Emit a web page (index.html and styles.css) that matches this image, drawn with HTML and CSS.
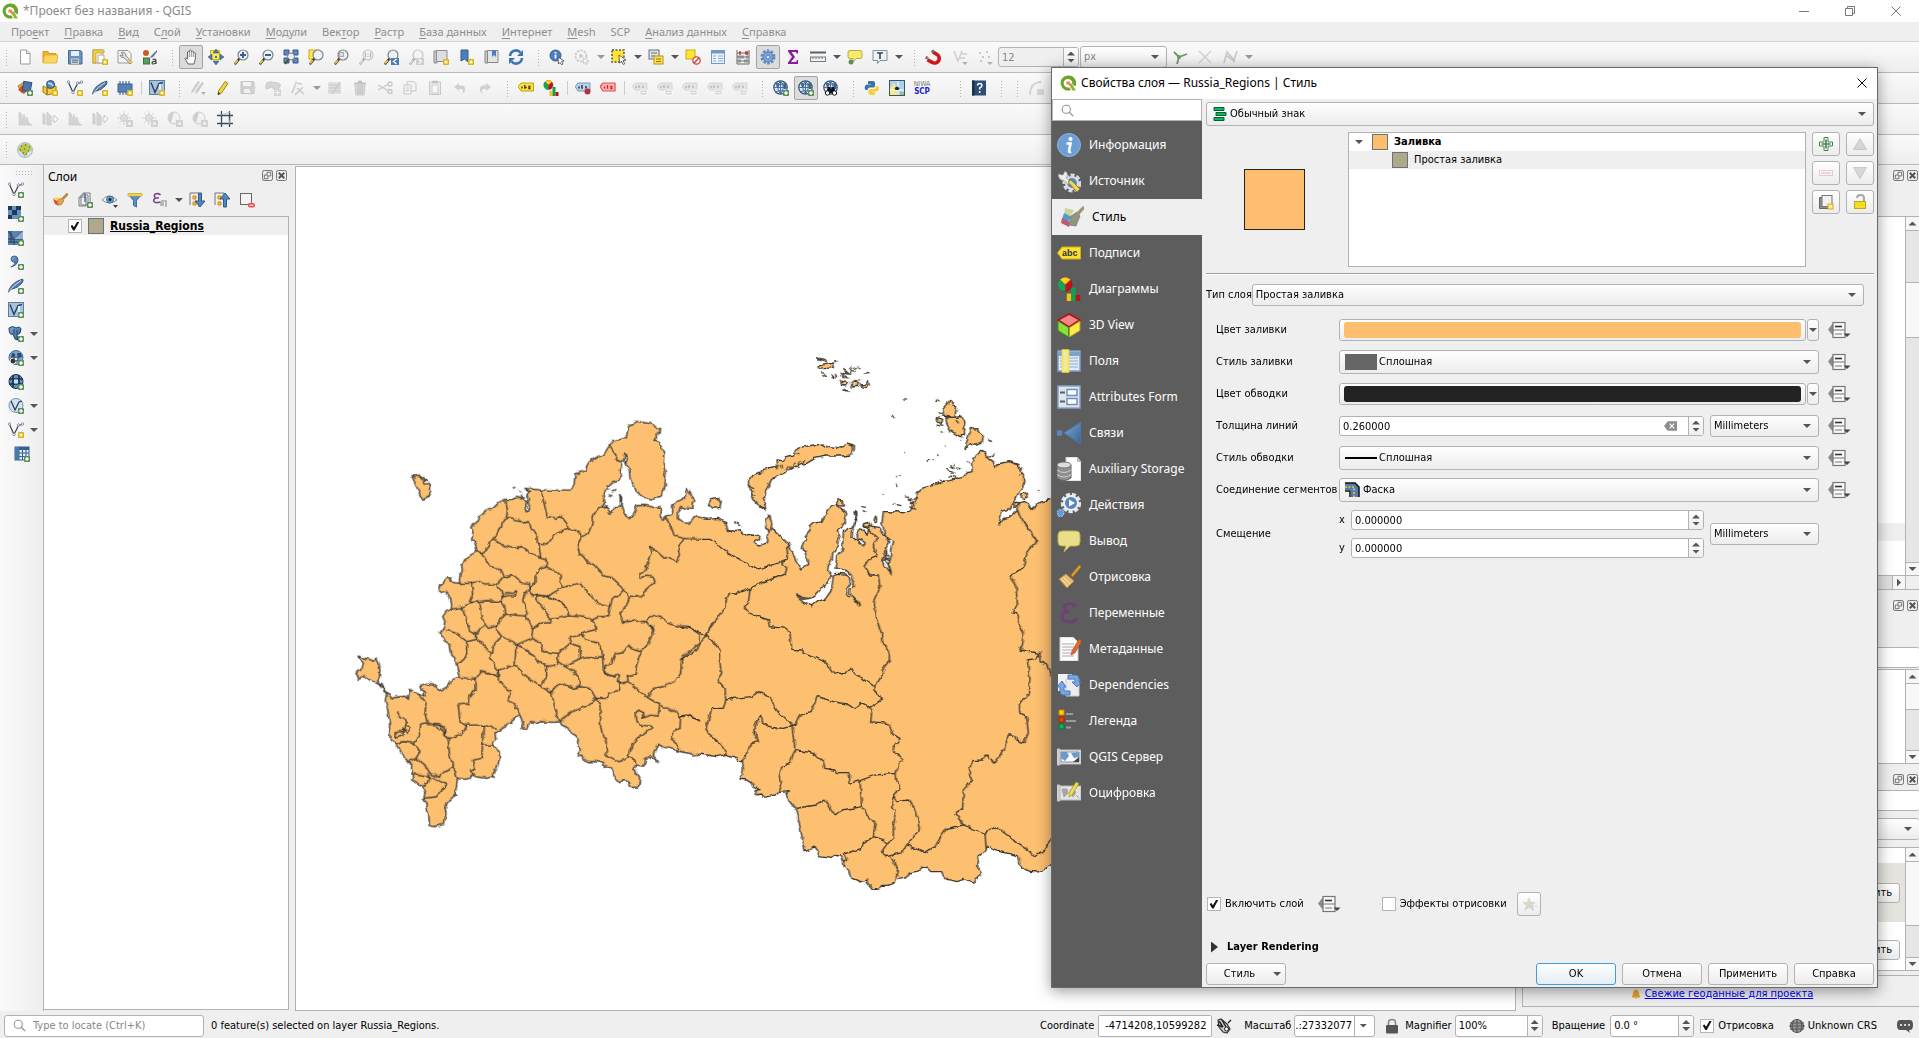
FILE: index.html
```html
<!DOCTYPE html>
<html lang="ru">
<head>
<meta charset="utf-8">
<title>*Проект без названия - QGIS</title>
<link rel="stylesheet" href="styles.css">
</head>
<body>
<svg class="sprite" aria-hidden="true">
<defs>
<filter id="coast" x="0" y="0" width="1" height="1"><feTurbulence type="fractalNoise" baseFrequency=".05" numOctaves="2" seed="4"/><feDisplacementMap in="SourceGraphic" scale="14" xChannelSelector="R" yChannelSelector="G"/></filter>
<linearGradient id="steel" x1="0" y1="0" x2="1" y2="1"><stop offset="0" stop-color="#7fa8d4"/><stop offset="1" stop-color="#39618f"/></linearGradient>
<g id="plusG"><rect x="10" y="10" width="6" height="6" rx="1" fill="#5b8f5a"/><path d="M13 11.200v3.600M11.200 13h3.600" stroke="#fff" stroke-width="1.600"/></g>
<g id="plusY"><rect x="10" y="10" width="6" height="6" rx="1" fill="#d8b41c"/><rect x="11.500" y="11.500" width="3" height="3" fill="#fff6b8"/></g>
<g id="lens"><path d="M2.500 14.500l4-5" stroke="#3b3a2c" stroke-width="2.400" stroke-linecap="round"/><path d="M2.200 14.500l2.600-3.200" stroke="#f2c53d" stroke-width="1.600"/><circle cx="10" cy="6" r="5" fill="#eef1f3" stroke="#7d8488" stroke-width="1.200"/></g>
</defs>
<symbol id="qlogo" viewBox="0 0 16 16"><path d="M8 .500a7.500 7.500 0 1 0 3 14.400L9.200 12.300A4.300 4.300 0 1 1 12.200 9l3 2.600A7.500 7.500 0 0 0 8 .500z" fill="#6aa52c"/><path d="M8 8l4 1 4 6.500h-3.500z" fill="#8cb82e"/><path d="M6.500 6.500h4l-1 1 2 2-1.500 1.500-2-2-1.500 1z" fill="#f0803c"/></symbol>
<symbol id="new" viewBox="0 0 16 16"><path d="M3.500 1h6l3.500 3.500V15h-9.500z" fill="#fff" stroke="#9a9a9a"/><path d="M9.500 1v3.500H13" fill="#e8e8e8" stroke="#9a9a9a"/></symbol>
<symbol id="open" viewBox="0 0 16 16"><path d="M1 2.500h5l1 2h7v9H1z" fill="#eeb42a" stroke="#d59c20"/><path d="M2.500 6H16l-1.500 8H1z" fill="#fbd75c" stroke="#dca72d" stroke-width=".8"/></symbol>
<symbol id="save" viewBox="0 0 16 16"><path d="M1.500 1.500h12l1.500 1.500v12H1.500z" fill="#6a93bf" stroke="#49698c"/><rect x="4" y="2" width="8" height="5" fill="#e6edf5"/><rect x="4" y="9.500" width="8" height="5.500" fill="#c9d3dd"/><path d="M5 11.200h6M5 13.200h6" stroke="#5c6975"/></symbol>
<symbol id="layout" viewBox="0 0 16 16"><rect x="1" y="1" width="9" height="13" fill="#fff" stroke="#9a9a9a"/><path d="M1 14V1h11v3H4v10z" fill="#f5ce4a" stroke="#c99c1c" stroke-width=".8"/><path d="M6 6h6v8H6z" fill="#fff" stroke="#aaa"/><use href="#plusY"/></symbol>
<symbol id="settings" viewBox="0 0 16 16"><path d="M1 1.500h10l3 3V14H1z" fill="#f4f4f4" stroke="#999"/><path d="M4 4a3 3 0 0 1 5 2.500l6 7-2 1.500-6-6.500A3 3 0 0 1 3 6l2.500 1L6 5z" fill="#d7dde3" stroke="#6f767c" stroke-width=".8"/><path d="M11 10l4 4" stroke="#e9bf3c" stroke-width="2"/></symbol>
<symbol id="stylemgr" viewBox="0 0 16 16"><circle cx="4" cy="4" r="3" fill="#cf5a28"/><path d="M15 1L9 7l-1 2 3-1 4-5z" fill="#55789c"/><rect x="1.500" y="9" width="6" height="6" fill="#59a05c" stroke="#39753c"/><path d="M10.500 10.500q3.500-1 3.500 1.500v3M14 12.500q-4-.5-4 1.500t4 0" fill="none" stroke="#444" stroke-width="1.200"/></symbol>
<symbol id="hand" viewBox="0 0 16 16"><path d="M5 15L2 9.500q0-1.500 2.500.5V3q1-1.300 1.800 0V1.700q1.200-1.200 2 0v1q1.200-1.200 2 0v1q1.200-1 2 .3V10l-1.300 5z" fill="#fff" stroke="#555" stroke-width=".9"/><path d="M6.300 3v5M8.300 3v5M10.300 3.500V8" stroke="#777" stroke-width=".8"/></symbol>
<symbol id="pan" viewBox="0 0 16 16"><rect x="2.500" y="1.500" width="9" height="9" fill="#ffe949" stroke="#c0a71a" stroke-width=".8"/><path d="M8 0l3 4H5zM8 16l3-4H5zM0 8l4-3v6zM16 8l-4-3v6z" fill="#4a76a8" stroke="#2e5078" stroke-width=".5"/><path d="M7 7h2v2H7z" fill="#4a76a8"/></symbol>
<symbol id="zin" viewBox="0 0 16 16"><use href="#lens"/><path d="M10 3v6M7 6h6" stroke="#355f97" stroke-width="2"/></symbol>
<symbol id="zout" viewBox="0 0 16 16"><use href="#lens"/><path d="M7 6h6" stroke="#355f97" stroke-width="2"/></symbol>
<symbol id="zfull" viewBox="0 0 16 16"><path d="M1 1h5v5H1zM10 1h5v5h-5zM10 9h5v5h-5zM1 9h5v5H1z" fill="#5b8ac0" stroke="#31588a"/><circle cx="8" cy="7.500" r="3.500" fill="#e8edf2" stroke="#777"/><path d="M2 15l4-5" stroke="#54512e" stroke-width="2"/></symbol>
<symbol id="zsel" viewBox="0 0 16 16"><rect x="1" y="1" width="10" height="9" fill="#ffe949" stroke="#c5aa1c"/><use href="#lens"/></symbol>
<symbol id="zlay" viewBox="0 0 16 16"><use href="#lens"/><rect x="6.500" y="3.500" width="4" height="4" fill="#ddd" stroke="#aaa"/></symbol>
<symbol id="znat" viewBox="0 0 16 16"><use href="#lens"/><path d="M7.500 3.500v5M12.500 3.500v5M10 4.500v1M10 7v1" stroke="#555" stroke-width="1.200"/></symbol>
<symbol id="zlast" viewBox="0 0 16 16"><use href="#lens"/><rect x="8" y="9" width="8" height="7" fill="#4d7db5"/><path d="M13.500 10l-3 2.500 3 2.500" fill="none" stroke="#fff" stroke-width="1.300"/></symbol>
<symbol id="znext" viewBox="0 0 16 16"><use href="#lens"/><rect x="8" y="9" width="8" height="7" fill="#8a9bb0"/><path d="M10.500 10l3 2.500-3 2.500" fill="none" stroke="#fff" stroke-width="1.300"/></symbol>
<symbol id="bmmap" viewBox="0 0 16 16"><path d="M1 2h3v12H1z" fill="#c9c9c9" stroke="#8d8d8d"/><path d="M3.500 1.500H14v11H3.500z" fill="#dedede" stroke="#8d8d8d"/><use href="#plusY"/></symbol>
<symbol id="bmnew" viewBox="0 0 16 16"><path d="M3 1h7v12l-3.500-3L3 12z" fill="#4f7fb8" stroke="#365d8c"/><use href="#plusY"/></symbol>
<symbol id="bm" viewBox="0 0 16 16"><path d="M2 2h3v12H2z" fill="#ccc" stroke="#888"/><path d="M4.500 1.500H15v12H4.500z" fill="#e4e4e4" stroke="#888"/><path d="M9 1h4v7l-2-2-2 2z" fill="#4f7fb8"/></symbol>
<symbol id="refresh" viewBox="0 0 16 16"><path d="M2 7a6 6 0 0 1 10.500-3.500M14 9a6 6 0 0 1-10.500 3.500" fill="none" stroke="#3d74b5" stroke-width="2.600"/><path d="M15 1v6H9zM1 15V9h6z" fill="#3d74b5"/></symbol>
<symbol id="ident" viewBox="0 0 16 16"><circle cx="6.500" cy="6.500" r="5.500" fill="#4b7fbc" stroke="#345f91"/><path d="M6.500 5.500v4M6.500 3v1.500" stroke="#fff" stroke-width="1.800"/><path d="M9 8l6 4-2.500.5L14 15l-1.500.8L11 13.500 9.500 15z" fill="#fff" stroke="#444" stroke-width=".8"/></symbol>
<symbol id="action" viewBox="0 0 16 16"><circle cx="7" cy="7" r="5.500" fill="none" stroke="#999" stroke-width="2" stroke-dasharray="2.500 1"/><path d="M5.500 4.500L10 7l-4.500 2.500z" fill="#888"/><path d="M9 9l6 3-2.500.5 1 2.500-1.500.5-1-2-1.500 1z" fill="#fff" stroke="#777" stroke-width=".8"/></symbol>
<symbol id="select" viewBox="0 0 16 16"><rect x="1" y="1" width="12" height="12" fill="#ffe531" stroke="#555" stroke-width="1.500" stroke-dasharray="2 1.500"/><path d="M8 6l7 5-3 .5 1.800 3.200-1.500.8-1.800-3L8.500 14z" fill="#fff" stroke="#444" stroke-width=".8"/></symbol>
<symbol id="selform" viewBox="0 0 16 16"><rect x="1" y="1" width="10" height="9" fill="#dce2e8" stroke="#67727d"/><path d="M3 4h6M3 7h4" stroke="#67727d"/><rect x="6" y="7" width="9" height="8" fill="#ffe14a" stroke="#b3941e"/><path d="M8 10h5M8 12.500h5" stroke="#8b7316"/></symbol>
<symbol id="desel" viewBox="0 0 16 16"><rect x="1" y="1" width="9" height="9" fill="#ffe531" stroke="#c7ab1e"/><circle cx="11.500" cy="11.500" r="3.700" fill="#fff" stroke="#cf3f3f" stroke-width="1.300"/><path d="M9 14l5-5" stroke="#cf3f3f" stroke-width="1.400"/></symbol>
<symbol id="table" viewBox="0 0 16 16"><rect x="1.500" y="1.500" width="13" height="13" fill="#eef4fa" stroke="#6e9ac6"/><path d="M1.500 3h13" stroke="#6e9ac6" stroke-width="3"/><path d="M3 7h3M8 7h5M3 9.500h3M8 9.500h5M3 12h3M8 12h5" stroke="#86add3"/></symbol>
<symbol id="abacus" viewBox="0 0 16 16"><path d="M2 1v14h12V1M2 4h12M2 8h12M2 12h12" fill="none" stroke="#666"/><path d="M4 4h2M10 4h3" stroke="#cf3b3b" stroke-width="3.500"/><path d="M3 8h6M11 8h2M3 12h3M9 12h4" stroke="#8c9095" stroke-width="3"/></symbol>
<symbol id="gear" viewBox="0 0 16 16"><circle cx="8" cy="8" r="6.200" fill="none" stroke="#5b8ac4" stroke-width="2.600" stroke-dasharray="2.500 1.400"/><circle cx="8" cy="8" r="5" fill="#7ca5d8" stroke="#4f7cb1"/><circle cx="8" cy="8" r="2" fill="#dde8f5" stroke="#4f7cb1"/></symbol>
<symbol id="sigma" viewBox="0 0 16 16"><path d="M3 1h10v3.500h-1.500L11 3H6.500l3.500 5-4 5h5.200l.8-2H13v4H3v-1.500L7 8 3 2.500z" fill="#8b1a9c"/></symbol>
<symbol id="ruler" viewBox="0 0 16 16"><path d="M0 3.500h16" stroke="#59626b" stroke-width="2"/><rect x=".5" y="8" width="15" height="4.500" fill="#eef0f1" stroke="#777e85"/><path d="M3 8v2M6 8v2M9 8v2M12 8v2" stroke="#777"/></symbol>
<symbol id="tip" viewBox="0 0 16 16"><path d="M3 1.500h10q2 0 2 2v4q0 2-2 2H9L6 13V9.500H3q-2 0-2-2v-4q0-2 2-2z" fill="#f7ea6e" stroke="#bda83a"/><circle cx="4" cy="13" r="2.500" fill="#5b8f5a"/></symbol>
<symbol id="text" viewBox="0 0 16 16"><path d="M1 1.500h14v10H8l-2.500 3v-3H1z" fill="#f0f3f5" stroke="#81909c"/><path d="M5 4h6M8 4v6" stroke="#445" stroke-width="1.600"/></symbol>
<symbol id="magnet" viewBox="0 0 16 16"><path d="M9 3l3.500 3.500a4.500 4.500 0 0 1-6.500 6.500L2 9.500" fill="none" stroke="#cf1515" stroke-width="3.600" transform="rotate(-12 8 8)"/><path d="M6.500 3.500L9 1.200M1 10l1.500-2.500" stroke="#777" stroke-width="2.600"/></symbol>
<symbol id="vtrace" viewBox="0 0 16 16"><path d="M2 2l4 10 4-10M10 5h5M8 9h5" fill="none" stroke="#999" stroke-width="1.500"/><path d="M10 13h6l-3 3z" fill="#555"/></symbol>
<symbol id="dots" viewBox="0 0 16 16"><path d="M2 4h2M9 3h2M5 8h2M3 12h2M11 8h2" stroke="#888" stroke-width="2"/><path d="M10 13h6l-3 3z" fill="#555"/></symbol>
<symbol id="topo" viewBox="0 0 16 16"><path d="M2 3l5 5 8-3M7 8l-2 7" fill="none" stroke="#679a6b" stroke-width="1.800"/><circle cx="7" cy="8" r="2" fill="#679a6b"/></symbol>
<symbol id="cross" viewBox="0 0 16 16"><path d="M2 2l12 12M14 2L2 14" stroke="#999" stroke-width="1.400"/></symbol>
<symbol id="self" viewBox="0 0 16 16"><path d="M2 14L5 3l7 8 3-9M4 6l9 7" fill="none" stroke="#998f76" stroke-width="1.800"/></symbol>
<symbol id="dsman" viewBox="0 0 16 16"><path d="M1 6l6-4 4 7-6 4z" fill="#f2bf38" stroke="#a97e13"/><path d="M1 10l4-5 6 5-4 4z" fill="#cf5030"/><path d="M6 2h8v9H6z" fill="#4b76ab" stroke="#2f5580" transform="rotate(10 10 7)"/><use href="#plusG"/></symbol>
<symbol id="newgpkg" viewBox="0 0 16 16"><path d="M1 6l4 2v7l-4-3zM5 8l9-2v7l-9 2z" fill="#f4cc37" stroke="#9b7b16"/><circle cx="8.500" cy="4.500" r="4" fill="#5a87bd" stroke="#2b4b73"/><path d="M6 3l3 1 2 2" stroke="#cddff1" stroke-width="1.500"/><use href="#plusY"/></symbol>
<symbol id="vee" viewBox="0 0 16 16"><path d="M1.500 2.500L6 12.500l4.500-9 4-1" fill="none" stroke="#33475c" stroke-width="1.200"/><g fill="#fff" stroke="#7b8894" stroke-width=".9"><circle cx="1.500" cy="2" r="1.200"/><circle cx="10.500" cy="3" r="1.200"/><circle cx="14.500" cy="2" r="1.200"/><circle cx="6" cy="12.500" r="1.200"/></g></symbol>
<symbol id="newshp" viewBox="0 0 16 16"><use href="#vee"/><use href="#plusY"/></symbol>
<symbol id="addvec" viewBox="0 0 16 16"><use href="#vee"/><use href="#plusG"/></symbol>
<symbol id="feather" viewBox="0 0 16 16"><path d="M0 15Q2 5 14.500 1q1.500 1-.5 4Q10 10 3 11.500z" fill="url(#steel)" stroke="#23405f" stroke-width=".8"/><path d="M0 15Q5 7 13 2.500" fill="none" stroke="#dbe7f3" stroke-width=".8"/></symbol>
<symbol id="newspl" viewBox="0 0 16 16"><use href="#feather"/><use href="#plusY"/></symbol>
<symbol id="addspl" viewBox="0 0 16 16"><use href="#feather"/><use href="#plusG"/></symbol>
<symbol id="mem" viewBox="0 0 16 16"><path d="M3 1v14M6 1v14M9 1v14M12 1v14" stroke="#5d7fa6" stroke-width="1.400"/><rect x="1" y="4" width="14" height="8" fill="#5682b5" stroke="#39618f"/><use href="#plusY"/></symbol>
<symbol id="veebox" viewBox="0 0 16 16"><rect x=".5" y=".5" width="15" height="14" fill="#a9c3dd" stroke="#5a7ea4"/><path d="M2 2.500L6 12.500l4-9 4-1" fill="none" stroke="#24415f" stroke-width="1.400"/><path d="M11 4v8" stroke="#e3edf6" stroke-width="2"/></symbol>
<symbol id="newvirt" viewBox="0 0 16 16"><use href="#veebox"/><use href="#plusY"/></symbol>
<symbol id="addvirt" viewBox="0 0 16 16"><use href="#veebox"/><use href="#plusG"/></symbol>
<symbol id="pencils" viewBox="0 0 16 16"><path d="M1 14l1-4 6-9 2 1-6 9zM5 14l1-4 6-8 2 1-6 9z" fill="#8f8f8f"/><path d="M11 12h5l-2.500 3z" fill="#555"/></symbol>
<symbol id="pencil" viewBox="0 0 16 16"><path d="M3 15l.5-4L10 1.500l3 1.800L6.500 13z" fill="#f2d93a" stroke="#8f7a1b" stroke-width=".9"/><path d="M3 15l.4-3 2 1.200z" fill="#333"/></symbol>
<symbol id="savelay" viewBox="0 0 16 16"><path d="M1 1.500h13v12H1z" fill="#999" stroke="#777"/><path d="M3 2h8v4H3zM4 9h6v4H4z" fill="#eee"/><path d="M9 14l5-8 2 1-5 8z" fill="#aaa"/></symbol>
<symbol id="addpoly" viewBox="0 0 16 16"><path d="M1 5q0-3 4-3t8 1 1 5-5 1-5-1-3 0z" fill="#aaa" stroke="#888"/><rect x="9" y="9" width="7" height="7" fill="#aaa"/><path d="M12.500 10v5M10 12.500h5" stroke="#fff"/></symbol>
<symbol id="vertex" viewBox="0 0 16 16"><path d="M2 13L6 3l6 1M7 8l7 6M13 7l-8 8" fill="none" stroke="#888" stroke-width="1.500"/><circle cx="6" cy="3" r="1.700" fill="#bbb"/></symbol>
<symbol id="multi" viewBox="0 0 16 16"><path d="M1 2h13v12H1z" fill="#c7c3ad"/><path d="M2 5h11M2 8h11M2 11h11" stroke="#888"/><path d="M4 14L12 2l2 1-8 11z" fill="#999"/></symbol>
<symbol id="trash" viewBox="0 0 16 16"><path d="M2 3.500h12M6 1.500h4" stroke="#777" stroke-width="1.800"/><path d="M3 5h10l-1 10H4z" fill="#b9adad" stroke="#888"/><path d="M6 6v8M8 6v8M10 6v8" stroke="#777"/></symbol>
<symbol id="cut" viewBox="0 0 16 16"><path d="M1 5l11 6M1 10l11-6" stroke="#888" stroke-width="1.400"/><circle cx="13" cy="11.500" r="2" fill="none" stroke="#888" stroke-width="1.400"/><circle cx="13" cy="4" r="2" fill="none" stroke="#888" stroke-width="1.400"/></symbol>
<symbol id="copy" viewBox="0 0 16 16"><path d="M5 1.500h7l2 2V11H5z" fill="#eee" stroke="#888"/><path d="M2 5h7v9H2z" fill="#eee" stroke="#888"/><path d="M4 8h3M4 10.500h3" stroke="#888"/></symbol>
<symbol id="paste" viewBox="0 0 16 16"><rect x="2.500" y="2" width="11" height="12.500" fill="#ddd" stroke="#888"/><rect x="5" y="5" width="6" height="8" fill="#fff" stroke="#999"/><path d="M5 2h6" stroke="#777" stroke-width="2.500"/></symbol>
<symbol id="undo" viewBox="0 0 16 16"><path d="M2 7l5-4v2.500h3q4 .5 3 5.500l-2.500 3q1.500-4.500-1-5H7V11z" fill="#9d9d9d"/></symbol>
<symbol id="redo" viewBox="0 0 16 16"><path d="M14 7L9 3v2.500H6Q2 6 3 11l2.500 3Q4 9.500 6.500 9H9v2z" fill="#9d9d9d"/></symbol>
<symbol id="label" viewBox="0 0 16 16"><path d="M0 6.500L3 3h12.500v8H3z" fill="#fbe136" stroke="#bfa31b"/><path d="M4 6.500v2M6.800 5v3.700M7.500 7.500h1.200M12.500 6.500h-1.500v2h1.500" stroke="#333" stroke-width="1.300" fill="none"/></symbol>
<symbol id="diag" viewBox="0 0 16 16"><circle cx="5.500" cy="5" r="4.500" fill="#c8101c" stroke="#7c1010" stroke-width=".4"/><path d="M5.500 5L2 1.800a4.500 4.500 0 0 1 7 0z" fill="#ffd21a"/><path d="M5.500 5v4.500A4.500 4.500 0 0 1 2 1.800z" fill="#12a655"/><path d="M6.500 11h3v5h-3z" fill="#f4c21a"/><path d="M9.500 7h3v9h-3z" fill="#12a04e"/><path d="M12.500 12h3v4h-3z" fill="#b3151c"/></symbol>
<symbol id="lblpin" viewBox="0 0 16 16"><path d="M0 6.500L3 3h12v8H3z" fill="#b9d2ee" stroke="#7397bf"/><path d="M4 6.500v2M7 5v3.700M11 6v2.500" stroke="#333" stroke-width="1.500"/><circle cx="12.500" cy="11.500" r="3" fill="#b5303c"/></symbol>
<symbol id="lblred" viewBox="0 0 16 16"><path d="M0 6.500L3 3h12v8H3z" fill="#ffb4b4" stroke="#ec4b4b" stroke-width="1.200"/><path d="M4.500 6.500v2M7.500 5v3.700M12.500 6.500h-1.500v2h1.500" stroke="#c22" stroke-width="1.300" fill="none"/></symbol>
<symbol id="lblgrey" viewBox="0 0 16 16"><path d="M0 6.500L3 3h12v7H3z" fill="#cfcdbf" stroke="#aaa793"/><path d="M4 6v2M7 5v3M11 5.500V8" stroke="#666" stroke-width="1.500"/><path d="M8 10h7v5H8z" fill="#aaa" stroke="#fff"/><path d="M9.500 12.500h4" stroke="#fff"/></symbol>
<symbol id="globe" viewBox="0 0 16 16"><circle cx="7.500" cy="7.500" r="6.700" fill="#dbe8f5" stroke="#335379" stroke-width="1.200"/><path d="M7.500 1v13M1 7.500h13M3 3.500q4.500 2 9 0M3 11.500q4.500-2 9 0M7.500 1Q2 7 7.500 14M7.500 1q5.500 6 0 13" fill="none" stroke="#496f9d"/><path d="M3 4q2-2 3 0t-2 4zM10 4h3v5h-2z" fill="#42648b"/></symbol>
<symbol id="globeadd" viewBox="0 0 16 16"><use href="#globe"/><use href="#plusG"/></symbol>
<symbol id="binoc" viewBox="0 0 16 16"><use href="#globe"/><path d="M3 13L5 7h2l1 2 1-2h2l2 6z" fill="#111"/><circle cx="4.500" cy="13" r="2.200" fill="#fff" stroke="#111"/><circle cx="11.500" cy="13" r="2.200" fill="#fff" stroke="#111"/></symbol>
<symbol id="python" viewBox="0 0 16 16"><path d="M5 1h4q2 0 2 2v3q0 1.500-2 1.500H5.500Q3.500 8 3.500 10H2Q0 9 1 6q.5-1.500 2-1.500h4V4H4V2q0-1 1-1z" fill="#3a72a8"/><path d="M10 15H7q-2.500 0-2.500-2v-2.500Q4.500 9 6.500 9h3Q12 9 12 6h1.500q2 1 1 4-.5 1.500-2 1.500h-4v.5H11v2q0 1-1 1z" fill="#f7cf3e"/></symbol>
<symbol id="osm" viewBox="0 0 16 16"><rect x=".5" y=".5" width="15" height="15" fill="#a9d2f0" stroke="#3e5263"/><path d="M1 8l4-5 3 5v7H1z" fill="#f5e98a"/><path d="M9 1v14M1 10h14" stroke="#fff"/><path d="M5.500 8l2.500-1.500L10.500 8l-1 2h-3z" fill="#222"/><path d="M11 12h4v3h-4z" fill="#8dc878"/></symbol>
<symbol id="help" viewBox="0 0 16 16"><path d="M1 .500h14v15H1z" fill="#2f4e72"/><path d="M1 .500h2.500v15H1z" fill="#1c324c"/><path d="M6.500 5.500q0-2 2.200-2t2.200 2q0 1.300-2.200 2.500v1.500M8.700 11v2" fill="none" stroke="#fff" stroke-width="1.500"/></symbol>
<symbol id="curve" viewBox="0 0 16 16"><path d="M2 15Q2 3 12 2" fill="none" stroke="#999" stroke-width="1.500"/><circle cx="12" cy="2" r="1.500" fill="#aaa"/><circle cx="4" cy="6" r="1.500" fill="#aaa"/><path d="M9 9h7v6H9z" fill="#aaa"/></symbol>
<symbol id="hist" viewBox="0 0 16 16"><path d="M2 1v13h13q-4-1-5-8Q9 12 7 3L6 12Q5 1 3 2z" fill="#a6aaa3" stroke="#888e86" stroke-width=".7"/></symbol>
<symbol id="histar" viewBox="0 0 16 16"><path d="M1 2l2 2v9H1zM5 1l4 4v9H5z" fill="#a6aaa3" stroke="#888e86"/><path d="M8 7h4V4l4 4-4 4V9H8z" fill="#fff" stroke="#888"/></symbol>
<symbol id="sun" viewBox="0 0 16 16"><path d="M7 0v14M0 7h14M2 2l10 10M12 2L2 12" stroke="#a9a58d"/><circle cx="7" cy="7" r="3.500" fill="#c4bd93" stroke="#a39d7c"/><path d="M9 9h7v7H9z" fill="#a8a391"/><path d="M10.500 13.500h4l-2-3z" fill="#fff"/></symbol>
<symbol id="contr" viewBox="0 0 16 16"><circle cx="7" cy="7" r="6" fill="#eee" stroke="#8e8e8e"/><path d="M7 1a6 6 0 0 0-3 11z" fill="#999"/><path d="M9 9h7v7H9z" fill="#a8a391"/><path d="M10.500 13.500h4l-2-3z" fill="#fff"/></symbol>
<symbol id="grid" viewBox="0 0 16 16"><path d="M4.500 0v16M12.500 0v16M0 4.500h16M0 12.500h16" stroke="#3b4b5b" stroke-width="1.300"/><path d="M4 4l9-3M12 13l2-8" stroke="#aebbc7" stroke-width=".8"/></symbol>
<symbol id="egg" viewBox="0 0 16 16"><circle cx="8" cy="8" r="7.500" fill="#cde3f1" stroke="#a6bbc7"/><path d="M2 5l5-4 6 2 2 5-4 2-3 5-4-5-3-2z" fill="#b2c853"/><path d="M4 4h1M8 3h1M12 5h1M3 8h1M7 7h1M11 9h1M6 11h1M9 12h1" stroke="#c84c32" stroke-width="1.500"/></symbol>
<symbol id="raster" viewBox="0 0 16 16"><path d="M0 0h13v13H0z" fill="#6790be"/><path d="M0 0h4v4H0zM8 0h5v4H8zM4 4h5v5H4zM0 9h4v4H0z" fill="#1d3a5c"/><use href="#plusG"/></symbol>
<symbol id="mesh" viewBox="0 0 16 16"><path d="M0 1h15v14H0z" fill="#5c83ae"/><path d="M0 1l6 8 9-8M0 9h15M3 1v12M0 12h10M6 9v6" fill="none" stroke="#20405f"/><path d="M6 9l9-8v8z" fill="#8fb0d3"/><use href="#plusG"/></symbol>
<symbol id="comma" viewBox="0 0 16 16"><path d="M3 13q4-2 4-4.500Q3 8 3 5t3.500-3Q10 2 10 6q0 5-7 7z" fill="url(#steel)" stroke="#2d517a" stroke-width=".8"/><use href="#plusG"/></symbol>
<symbol id="pg" viewBox="0 0 16 16"><path d="M1 2q4-3 7 0 4-2 5 1 0 5-4 6l1 5-3-1-2-5q-4 2-4-6z" fill="url(#steel)" stroke="#1f4168"/><path d="M6 3v5M9 4v4" stroke="#1f4168"/><use href="#plusG"/></symbol>
<symbol id="wms" viewBox="0 0 16 16"><circle cx="8" cy="7.500" r="7" fill="#7ca4cf" stroke="#426c9a"/><path d="M4 3q4 0 3 3T3 8zM9 3h4l1 4-4 1z" fill="#264c77"/><circle cx="5" cy="11" r="3" fill="#333" stroke="#eee"/><circle cx="8" cy="9" r="2" fill="#eee" stroke="#333"/><use href="#plusG"/></symbol>
<symbol id="wcs" viewBox="0 0 16 16"><circle cx="8" cy="7.500" r="7" fill="#6790be" stroke="#17324f"/><path d="M1 5h14M1 10h14M5 1v13M11 1v13" stroke="#17324f" stroke-width="1.600"/><path d="M6 5.500h4v4H6z" fill="#cfe0f1"/><use href="#plusG"/></symbol>
<symbol id="wfs" viewBox="0 0 16 16"><circle cx="8" cy="7.500" r="7" fill="#d3e1ef" stroke="#7393b5"/><path d="M3 3l4 9 4-8 3-1" fill="none" stroke="#2d4258" stroke-width="1.300"/><use href="#plusG"/></symbol>
<symbol id="addtab" viewBox="0 0 16 16"><rect x="1" y="1" width="14" height="13" fill="#dfe9f3" stroke="#35618f"/><path d="M1 2.500h14" stroke="#35618f" stroke-width="3"/><path d="M5 1v13M8.500 1v13M12 1v13M1 7h14M1 10.500h14" stroke="#35618f"/><path d="M1 1h4v13H1z" fill="#4b79aa"/><use href="#plusG"/></symbol>
<symbol id="brush" viewBox="0 0 16 16"><path d="M1 6l5-1 3 4-3 3z" fill="#f5d94e"/><path d="M1 7l4 2 2 5-4-2z" fill="#e4463f"/><path d="M15 1L10 6l1.500 1.500L16 3z" fill="#c28736" stroke="#a66d23" stroke-width=".5"/><path d="M6 8l3-2 3 3-3 4-4-1z" fill="#e3a34f" stroke="#a66d23" stroke-width=".6"/></symbol>
<symbol id="group" viewBox="0 0 16 16"><path d="M6 1h7v10H6z" fill="#fff" stroke="#777"/><path d="M4 3h7v10H4zM2 5h7v9H2z" fill="#f4f4f4" stroke="#777"/><path d="M8 1v9" stroke="#4379b2" stroke-width="1.500"/><use href="#plusG"/></symbol>
<symbol id="eye" viewBox="0 0 16 16"><path d="M0 8q7-8 15 0-8 6-15 0z" fill="#f4f6f8" stroke="#7c8b99"/><circle cx="8" cy="7.500" r="3.500" fill="#6c9bcb" stroke="#456d97"/><circle cx="8" cy="7.500" r="1.500" fill="#1b2733"/><path d="M11 13h5l-2.500 3z" fill="#444"/></symbol>
<symbol id="filter" viewBox="0 0 16 16"><path d="M1 2h14L9.500 8.500V15l-3-1.500v-5z" fill="#5b8fc6" stroke="#3c6ea4"/><path d="M1 1.500h14v2.500H1z" fill="#f8dc3f" stroke="#c9a91b" stroke-width=".6"/></symbol>
<symbol id="eps" viewBox="0 0 16 16"><path d="M8.500 3Q7 1 4 1.800T3.500 6Q1 7.500 2 9.500t6.500.5M3.500 6H7" fill="none" stroke="#77458a" stroke-width="1.600"/><path d="M9 9h5v6M9 9v5M11 10v4" fill="none" stroke="#aaa" stroke-width="1.600"/></symbol>
<symbol id="expand" viewBox="0 0 16 16"><path d="M1 1h9v14M1 1v12M4 5h3M4 11h3" fill="none" stroke="#777"/><path d="M4 4h3v3H4zM4 10h3v3H4z" fill="#f9c23d" stroke="#d28a1c"/><path d="M9.500 1h3v8H16l-5 6-5-6h3.500z" fill="#5285bd" stroke="#2f5c8d"/></symbol>
<symbol id="collapse" viewBox="0 0 16 16"><path d="M1 1h9v14M1 1v12" fill="none" stroke="#777"/><path d="M4 4h3v3H4zM4 10h3v3H4z" fill="#f9c23d" stroke="#d28a1c"/><path d="M9.500 15h3V7H16l-5-6-5 6h3.500z" fill="#5285bd" stroke="#2f5c8d"/></symbol>
<symbol id="remove" viewBox="0 0 16 16"><rect x="1.500" y="1.500" width="11" height="11" fill="#f4f4f4" stroke="#666"/><rect x="9" y="11" width="7" height="4.500" rx="2" fill="#ee4a4a"/><path d="M10.500 13.200h4" stroke="#fff"/></symbol>
<symbol id="float" viewBox="0 0 12 12"><rect x=".5" y=".5" width="11" height="11" rx="2" fill="none" stroke="#666"/><path d="M5.500 2.500h4v4h-4zM2.500 5.500v4h4v-2.500M2.500 5.500H5" fill="none" stroke="#666"/></symbol>
<symbol id="shut" viewBox="0 0 12 12"><rect x=".5" y=".5" width="11" height="11" rx="2" fill="none" stroke="#666"/><path d="M3 3l6 6M9 3L3 9" stroke="#555" stroke-width="2.200"/></symbol>
<symbol id="search" viewBox="0 0 16 16"><circle cx="6.500" cy="6.500" r="5" fill="none" stroke="#888" stroke-width="1.200"/><path d="M10 10l5 5" stroke="#888" stroke-width="1.500"/></symbol>
<symbol id="s-info" viewBox="0 0 24 24"><circle cx="12" cy="12" r="11.500" fill="#6d9ed6" stroke="#8fb4df"/><path d="M9.500 10.500h4L12 18q0 1.500 2 .5" fill="none" stroke="#fff" stroke-width="2.600"/><circle cx="13.500" cy="6" r="2" fill="#fff"/></symbol>
<symbol id="s-source" viewBox="0 0 24 24"><circle cx="15" cy="14" r="8" fill="none" stroke="#d6dade" stroke-width="3" stroke-dasharray="4 2"/><circle cx="15" cy="14" r="6" fill="#5c88bb" stroke="#dfe3e7" stroke-width="2"/><path d="M1 5l5 1 2-4Q12 4 9.500 9l4 4-2.500 2.500-4-4Q2 12 1 5z" fill="#ececec" stroke="#8b8b8b" stroke-width=".7"/><path d="M11 13l3-2 9 9-3 3z" fill="#ecd75d" stroke="#8f7d2b"/></symbol>
<symbol id="s-style" viewBox="0 0 24 24"><path d="M5 3l9 2-4 7-6-1z" fill="#c5d79a"/><path d="M4 8l8 4-4 5-6-3z" fill="#5b9acb"/><path d="M2 13l8 4-1 5-8-4z" fill="#c05873"/><path d="M11 11l6-4 3 4-4 10-7-1z" fill="#8e9680" stroke="#777d6c" stroke-width=".7"/><path d="M16 8l7-7 2 2-6 7z" fill="#a09474"/></symbol>
<symbol id="s-3d" viewBox="0 0 24 24"><path d="M12 1l11 6-11 7L1 7z" fill="#f48787" stroke="#b50d17" stroke-width="1.500"/><path d="M1 8l10.500 6.500V24L1 17.500z" fill="#8be03b" stroke="#409320"/><path d="M23 8l-10.500 6.500V24L23 17.500z" fill="#f9ea4e" stroke="#b39d19"/></symbol>
<symbol id="s-fields" viewBox="0 0 24 24"><rect x="1" y="2" width="22" height="20" fill="#e2ebf4" stroke="#7fa2ca" stroke-width="1.500"/><path d="M1 5h22" stroke="#7fa2ca" stroke-width="4"/><path d="M3 9h18M3 12h18M3 15h18M3 18h18" stroke="#8fadcf"/><rect x="5.500" y="1" width="6" height="22" fill="#f1e99f" stroke="#f5e542" stroke-width="1.500"/></symbol>
<symbol id="s-form" viewBox="0 0 24 24"><rect x="1" y="1" width="22" height="22" fill="#dfe5ea" stroke="#88a4c4" stroke-width="1.500"/><path d="M3 7.500h5M3 16.500h5" stroke="#55606b" stroke-width="2"/><path d="M10 4.500h10v6H10zM10 13.500h10v6H10z" fill="#fff" stroke="#6a91be" stroke-width="1.500"/></symbol>
<symbol id="s-join" viewBox="0 0 24 24"><circle cx="2.500" cy="12" r="3" fill="#5787bc"/><path d="M24 1v22L7 12z" fill="url(#steel)" stroke="#4779b3"/></symbol>
<symbol id="s-aux" viewBox="0 0 24 24"><path d="M9 0h11l4 5v19H9z" fill="#fff" stroke="#ccc"/><path d="M20 0v5h4z" fill="#bbb"/><path d="M0 8v13q7 5 14 0V8z" fill="#8f8f8f" stroke="#666"/><ellipse cx="7" cy="8" rx="7" ry="3" fill="#ddd" stroke="#777"/><path d="M0 13q7 5 14 0M0 17.500q7 5 14 0" fill="none" stroke="#d0d0d0"/></symbol>
<symbol id="s-act" viewBox="0 0 24 24"><circle cx="14" cy="10" r="8.500" fill="none" stroke="#e4e7ea" stroke-width="3.500" stroke-dasharray="4 1.800"/><circle cx="14" cy="10" r="7" fill="#5686bc" stroke="#eceff2" stroke-width="2"/><path d="M12 6.500l6 3.500-6 3.500z" fill="#fff"/><circle cx="3.500" cy="20" r="3.500" fill="#5d9ade" stroke="#c8d3df" stroke-dasharray="2 1"/></symbol>
<symbol id="s-tip" viewBox="0 0 24 24"><path d="M5 2h14q4 0 4 4v7q0 4-4 4h-6l-6 6 2-6H5q-4 0-4-4V6q0-4 4-4z" fill="#e9de89" stroke="#bfb046"/></symbol>
<symbol id="s-brush" viewBox="0 0 24 24"><path d="M22.500 0L14 10l1.500 2L24 2z" fill="#e0a03b" stroke="#b87919"/><path d="M9 9l8 7-7 7-8-9z" fill="#e9bc76" stroke="#c28736"/><path d="M4 14l7 7M6 12l7 7" stroke="#f6dfb8"/></symbol>
<symbol id="s-eps" viewBox="0 0 24 24"><path d="M18 6Q17 2 12 2.500T7.500 7q0 4 5 4-7 0-7.500 4.500T11 21t8-4" fill="none" stroke="#6b4272" stroke-width="3"/></symbol>
<symbol id="s-meta" viewBox="0 0 24 24"><path d="M3 0h13l5 5v19H3z" fill="#fcfcfc" stroke="#ccc"/><path d="M5 7h12M5 10h12M5 13h12M5 16h12M5 19h12" stroke="#aaa"/><path d="M22 2l3 2-7 12-4 2 1-4z" fill="#e2662e" stroke="#a24b24" stroke-width=".6"/></symbol>
<symbol id="s-dep" viewBox="0 0 24 24"><path d="M1 1h14v17H1z" fill="#f2f2f2"/><path d="M9 6h13v17H9z" fill="#ededed" stroke="#ccc"/><path d="M11 2h8q3 0 3 4v3h2l-4 5-5-5h3V6h-7zM13 22H6q-3 0-3-4v-4H0l5-6 4 6H7v4h6z" fill="#79a8e3" stroke="#4678bd"/></symbol>
<symbol id="s-leg" viewBox="0 0 24 24"><path d="M2 1h5v5H2z" fill="#ffd400" stroke="#c98a00"/><path d="M2 8h5v5H2z" fill="#f23c00" stroke="#a52b00"/><path d="M2 15h5v5H2z" fill="#12b358" stroke="#077338"/><path d="M9 5h7M9 12h10M9 18.500h5" stroke="#999" stroke-width="2"/></symbol>
<symbol id="s-srv" viewBox="0 0 24 24"><path d="M0 4h3v16H0zM2 5h22v14H2z" fill="#e9e9e9" stroke="#bbb"/><path d="M4 7h18v10H4z" fill="#f9fbfc" stroke="#889"/><path d="M4 7h6l2 4-4 5-4-3zM14 8l8-1v5l-5 1z" fill="#6a9bcc"/><path d="M16 17l6-5v5z" fill="#444"/></symbol>
<symbol id="s-dig" viewBox="0 0 24 24"><path d="M0 4h3v16H0zM2 5h22v14H2z" fill="#e3e3e3" stroke="#bbb"/><path d="M5 8h5l1 4-4 4zM13 9l6 2-3 5zM19 14l3 3" fill="#a3a6a6" stroke="#a3a6a6"/><path d="M19 1l3 1.500L15 14l-3 2v-4z" fill="#f0df4d" stroke="#9c8c1f" stroke-width=".7"/></symbol>
<symbol id="ovr" viewBox="0 0 24 18"><path d="M6 2v13L1 8.500z" fill="#8a8a8a"/><rect x="6" y="1.500" width="12" height="15" fill="#f8f8f8" stroke="#777" stroke-width="1.200"/><path d="M8 5.500h7" stroke="#333" stroke-width="1.600"/><path d="M6 9h12M8 13h7" stroke="#777" stroke-width="1.200"/><path d="M16.500 12.500h7L20 16z" fill="#444"/></symbol>
</svg>

<header class="titlebar">
  <svg class="i16"><use href="#qlogo"/></svg><span class="titletext">*Проект без названия - QGIS</span>
  <div class="wincontrols">
    <button type="button" aria-label="Свернуть"><svg viewBox="0 0 10 10"><path d="M0 5.500h10"/></svg></button>
    <button type="button" aria-label="Развернуть"><svg viewBox="0 0 10 10"><path d="M.5 2.500h7v7h-7zM2.500 2.500v-2h7v7h-2"/></svg></button>
    <button type="button" aria-label="Закрыть"><svg viewBox="0 0 10 10"><path d="M.5.5l9 9M9.500.5l-9 9"/></svg></button>
  </div>
</header>

<nav class="menubar">
  <span>Про<u>е</u>кт</span><span><u>П</u>равка</span><span><u>В</u>ид</span><span>С<u>л</u>ой</span><span><u>У</u>становки</span><span><u>М</u>одули</span><span>Век<u>т</u>ор</span><span><u>Р</u>астр</span><span><u>Б</u>аза данных</span><span><u>И</u>нтернет</span><span><u>M</u>esh</span><span>SCP</span><span><u>А</u>нализ данных</span><span><u>С</u>правка</span>
</nav>

<div class="toolbar">
  <i class="grip"></i>
  <button class="tb" type="button" aria-label="Создать"><svg><use href="#new"/></svg></button>
  <button class="tb" type="button" aria-label="Открыть"><svg><use href="#open"/></svg></button>
  <button class="tb" type="button" aria-label="Сохранить"><svg><use href="#save"/></svg></button>
  <button class="tb" type="button" aria-label="Создать макет"><svg><use href="#layout"/></svg></button>
  <button class="tb" type="button" aria-label="Менеджер макетов"><svg><use href="#settings"/></svg></button>
  <button class="tb" type="button" aria-label="Управление стилями"><svg><use href="#stylemgr"/></svg></button>
  <i class="grip"></i>
  <button class="tb on" type="button" aria-label="Прокрутка карты"><svg><use href="#hand"/></svg></button>
  <button class="tb" type="button" aria-label="Прокрутка к выделению"><svg><use href="#pan"/></svg></button>
  <button class="tb" type="button" aria-label="Увеличить"><svg><use href="#zin"/></svg></button>
  <button class="tb" type="button" aria-label="Уменьшить"><svg><use href="#zout"/></svg></button>
  <button class="tb" type="button" aria-label="Полный охват"><svg><use href="#zfull"/></svg></button>
  <button class="tb" type="button" aria-label="К выделению"><svg><use href="#zsel"/></svg></button>
  <button class="tb" type="button" aria-label="К слою"><svg><use href="#zlay"/></svg></button>
  <button class="tb" type="button" disabled aria-label="Исходный масштаб"><svg><use href="#znat"/></svg></button>
  <button class="tb" type="button" aria-label="Предыдущий охват"><svg><use href="#zlast"/></svg></button>
  <button class="tb" type="button" disabled aria-label="Следующий охват"><svg><use href="#znext"/></svg></button>
  <button class="tb" type="button" aria-label="Новый вид карты"><svg><use href="#bmmap"/></svg></button>
  <button class="tb" type="button" aria-label="Новая закладка"><svg><use href="#bmnew"/></svg></button>
  <button class="tb" type="button" aria-label="Закладки"><svg><use href="#bm"/></svg></button>
  <button class="tb" type="button" aria-label="Обновить"><svg><use href="#refresh"/></svg></button>
  <i class="grip"></i>
  <button class="tb" type="button" aria-label="Определить объекты"><svg><use href="#ident"/></svg></button>
  <button class="tb" type="button" disabled aria-label="Действие"><svg><use href="#action"/></svg></button><i class="drop pale"></i>
  <button class="tb" type="button" aria-label="Выделить"><svg><use href="#select"/></svg></button><i class="drop"></i>
  <button class="tb" type="button" aria-label="Выделить по форме"><svg><use href="#selform"/></svg></button><i class="drop"></i>
  <button class="tb" type="button" aria-label="Снять выделение"><svg><use href="#desel"/></svg></button>
  <button class="tb" type="button" aria-label="Таблица атрибутов"><svg><use href="#table"/></svg></button>
  <button class="tb" type="button" aria-label="Калькулятор полей"><svg><use href="#abacus"/></svg></button>
  <button class="tb on" type="button" aria-label="Инструменты анализа"><svg><use href="#gear"/></svg></button>
  <button class="tb" type="button" aria-label="Статистика"><svg><use href="#sigma"/></svg></button>
  <button class="tb" type="button" aria-label="Измерить линию"><svg><use href="#ruler"/></svg></button><i class="drop"></i>
  <button class="tb" type="button" aria-label="Всплывающие описания"><svg><use href="#tip"/></svg></button>
  <button class="tb" type="button" aria-label="Аннотация"><svg><use href="#text"/></svg></button><i class="drop"></i>
  <i class="grip"></i>
  <button class="tb wide" type="button" aria-label="Прилипание"><svg><use href="#magnet"/></svg></button>
  <button class="tb" type="button" disabled aria-label="Слои прилипания"><svg><use href="#vtrace"/></svg></button>
  <button class="tb" type="button" disabled aria-label="Тип прилипания"><svg><use href="#dots"/></svg></button>
  <div class="spin tolerance off"><input type="text" value="12" disabled aria-label="Порог"><i class="steps"></i></div>
  <div class="combo snapunits off"><select disabled aria-label="Единицы"><option>px</option></select></div>
  <button class="tb" type="button" aria-label="Топология"><svg><use href="#topo"/></svg></button>
  <button class="tb" type="button" disabled aria-label="Пересечения"><svg><use href="#cross"/></svg></button>
  <button class="tb" type="button" disabled aria-label="Самоприлипание"><svg><use href="#self"/></svg></button><i class="drop pale"></i>
</div>

<div class="toolbar">
  <i class="grip"></i>
  <button class="tb" type="button" aria-label="Источники данных"><svg><use href="#dsman"/></svg></button>
  <button class="tb" type="button" aria-label="Новый GeoPackage"><svg><use href="#newgpkg"/></svg></button>
  <button class="tb" type="button" aria-label="Новый shape"><svg><use href="#newshp"/></svg></button>
  <button class="tb" type="button" aria-label="Новый SpatiaLite"><svg><use href="#newspl"/></svg></button>
  <button class="tb" type="button" aria-label="Временный слой"><svg><use href="#mem"/></svg></button>
  <i class="sep"></i>
  <button class="tb" type="button" aria-label="Виртуальный слой"><svg><use href="#newvirt"/></svg></button>
  <i class="grip"></i>
  <button class="tb" type="button" disabled aria-label="Текущие правки"><svg><use href="#pencils"/></svg></button>
  <button class="tb" type="button" aria-label="Режим редактирования"><svg><use href="#pencil"/></svg></button>
  <button class="tb" type="button" disabled aria-label="Сохранить правки"><svg><use href="#savelay"/></svg></button>
  <button class="tb" type="button" disabled aria-label="Добавить полигон"><svg><use href="#addpoly"/></svg></button>
  <button class="tb" type="button" disabled aria-label="Вершины"><svg><use href="#vertex"/></svg></button><i class="drop pale"></i>
  <button class="tb" type="button" disabled aria-label="Изменить атрибуты"><svg><use href="#multi"/></svg></button>
  <button class="tb" type="button" disabled aria-label="Удалить"><svg><use href="#trash"/></svg></button>
  <button class="tb" type="button" disabled aria-label="Вырезать"><svg><use href="#cut"/></svg></button>
  <button class="tb" type="button" disabled aria-label="Копировать"><svg><use href="#copy"/></svg></button>
  <button class="tb" type="button" disabled aria-label="Вставить"><svg><use href="#paste"/></svg></button>
  <button class="tb" type="button" disabled aria-label="Отменить"><svg><use href="#undo"/></svg></button>
  <button class="tb" type="button" disabled aria-label="Повторить"><svg><use href="#redo"/></svg></button>
  <i class="grip"></i>
  <button class="tb" type="button" aria-label="Подписи слоя"><svg><use href="#label"/></svg></button>
  <button class="tb" type="button" aria-label="Диаграммы слоя"><svg><use href="#diag"/></svg></button>
  <i class="sep"></i>
  <button class="tb" type="button" aria-label="Закреплённые подписи"><svg><use href="#lblpin"/></svg></button>
  <button class="tb" type="button" aria-label="Неразмещённые подписи"><svg><use href="#lblred"/></svg></button>
  <i class="sep"></i>
  <button class="tb" type="button" disabled aria-label="Закрепить подпись"><svg><use href="#lblgrey"/></svg></button>
  <button class="tb" type="button" disabled aria-label="Показать подпись"><svg><use href="#lblgrey"/></svg></button>
  <button class="tb" type="button" disabled aria-label="Переместить подпись"><svg><use href="#lblgrey"/></svg></button>
  <button class="tb" type="button" disabled aria-label="Повернуть подпись"><svg><use href="#lblgrey"/></svg></button>
  <button class="tb" type="button" disabled aria-label="Изменить подпись"><svg><use href="#lblgrey"/></svg></button>
  <i class="grip"></i>
  <button class="tb" type="button" aria-label="Добавить сервис"><svg><use href="#globeadd"/></svg></button>
  <button class="tb on" type="button" aria-label="Поиск сервисов"><svg><use href="#globeadd"/></svg></button>
  <button class="tb" type="button" aria-label="Metasearch"><svg><use href="#binoc"/></svg></button>
  <i class="grip"></i>
  <button class="tb" type="button" aria-label="Консоль Python"><svg><use href="#python"/></svg></button>
  <button class="tb" type="button" aria-label="OSM"><svg><use href="#osm"/></svg></button>
  <button class="tb scp" type="button"><small>NIWA</small><b>SCP</b></button>
  <i class="grip far"></i>
  <button class="tb" type="button" aria-label="Справка"><svg><use href="#help"/></svg></button>
  <i class="grip"></i><i class="grip"></i>
  <button class="tb" type="button" disabled aria-label="Кривая"><svg><use href="#curve"/></svg></button>
</div>

<div class="toolbar">
  <i class="grip"></i>
  <button class="tb" type="button" disabled aria-label="Растяжение гистограммы"><svg><use href="#hist"/></svg></button>
  <button class="tb" type="button" disabled aria-label="Растяжение по охвату"><svg><use href="#histar"/></svg></button>
  <button class="tb" type="button" disabled aria-label="Локальное растяжение"><svg><use href="#hist"/></svg></button>
  <button class="tb" type="button" disabled aria-label="Полное растяжение"><svg><use href="#histar"/></svg></button>
  <button class="tb" type="button" disabled aria-label="Ярче"><svg><use href="#sun"/></svg></button>
  <button class="tb" type="button" disabled aria-label="Темнее"><svg><use href="#sun"/></svg></button>
  <button class="tb" type="button" disabled aria-label="Увеличить контраст"><svg><use href="#contr"/></svg></button>
  <button class="tb" type="button" disabled aria-label="Уменьшить контраст"><svg><use href="#contr"/></svg></button>
  <button class="tb" type="button" aria-label="Привязка растров"><svg><use href="#grid"/></svg></button>
</div>

<div class="toolbar last">
  <i class="grip"></i>
  <button class="tb" type="button" aria-label="Модуль"><svg><use href="#egg"/></svg></button>
</div>

<main class="work">
  <div class="sidetools">
    <i class="hgrip"></i>
    <div class="siderow"><button type="button" aria-label="Добавить векторный слой"><svg><use href="#addvec"/></svg></button></div>
    <div class="siderow"><button type="button" aria-label="Добавить растр"><svg><use href="#raster"/></svg></button></div>
    <div class="siderow"><button type="button" aria-label="Добавить mesh"><svg><use href="#mesh"/></svg></button></div>
    <div class="siderow"><button type="button" aria-label="Добавить текст с разделителями"><svg><use href="#comma"/></svg></button></div>
    <div class="siderow"><button type="button" aria-label="Добавить SpatiaLite"><svg><use href="#addspl"/></svg></button></div>
    <div class="siderow"><button type="button" aria-label="Добавить виртуальный слой"><svg><use href="#addvirt"/></svg></button></div>
    <div class="siderow"><button type="button" aria-label="Добавить PostGIS"><svg><use href="#pg"/></svg></button><i class="drop"></i></div>
    <div class="siderow"><button type="button" aria-label="Добавить WMS"><svg><use href="#wms"/></svg></button><i class="drop"></i></div>
    <div class="siderow"><button type="button" aria-label="Добавить WCS"><svg><use href="#wcs"/></svg></button></div>
    <div class="siderow"><button type="button" aria-label="Добавить WFS"><svg><use href="#wfs"/></svg></button><i class="drop"></i></div>
    <div class="siderow"><button type="button" aria-label="Новый слой"><svg><use href="#newshp"/></svg></button><i class="drop"></i></div>
    <div class="siderow mid"><button type="button" aria-label="Добавить таблицу"><svg><use href="#addtab"/></svg></button></div>
  </div>

  <section class="layers">
    <div class="dockhead"><h2>Слои</h2><button type="button" aria-label="Открепить"><svg><use href="#float"/></svg></button><button type="button" aria-label="Закрыть"><svg><use href="#shut"/></svg></button></div>
    <div class="layertools">
      <button class="tb" type="button" aria-label="Стиль слоя"><svg><use href="#brush"/></svg></button>
      <button class="tb" type="button" aria-label="Добавить группу"><svg><use href="#group"/></svg></button>
      <button class="tb" type="button" aria-label="Темы карты"><svg><use href="#eye"/></svg></button>
      <button class="tb" type="button" aria-label="Фильтр легенды"><svg><use href="#filter"/></svg></button>
      <button class="tb" type="button" aria-label="Фильтр по выражению"><svg><use href="#eps"/></svg></button><i class="drop"></i>
      <button class="tb" type="button" aria-label="Развернуть всё"><svg><use href="#expand"/></svg></button>
      <button class="tb" type="button" aria-label="Свернуть всё"><svg><use href="#collapse"/></svg></button>
      <button class="tb" type="button" aria-label="Удалить слой"><svg><use href="#remove"/></svg></button>
    </div>
    <div class="tree">
      <label class="treerow"><input type="checkbox" checked><i class="swatch khaki"></i><b>Russia_Regions</b></label>
    </div>
  </section>

  <section class="canvas" aria-label="Карта">
    <svg class="map" viewBox="888 501 3657 2529">
      <g filter="url(#coast)">
      <g transform="translate(1020 1230)">
        <path class="land" d="M1080 322L1062 320 1050 338 1035 340 1015 325 1015 300 1022 290 1035 294 1058 295 1060 280 1065 272 1052 248 1040 235 1037 250 1035 260 1010 278 998 285 998 308 980 318 968 328 963 315 965 296 958 290 940 292 915 286 890 287 884 305 876 318 868 326 858 318 850 305 843 285 845 265 838 255 840 262 842 285 836 290 825 290 820 303 808 310 800 300 801 286 796 294 790 290 797 280 790 262 790 248 800 240 802 230 818 215 838 210 843 190 841 178 848 165 845 155 853 145 855 130 862 145 860 165 868 178 870 205 885 240 910 262 940 268 965 255 977 235 973 210 976 185 970 160 972 130 958 97 940 92 950 85 948 72 960 70 962 55 948 58 945 45 930 40 910 38 888 34 880 42 865 50 858 85 818 92 808 107 790 135 770 142 748 155 742 165 735 182 720 188 705 192 702 225 690 240 605 240 555 235 572 246 560 255 565 268 564 280 571 285 567 302 558 305 555 290 560 275 548 265 530 262 518 268 497 268 480 275 455 298 435 300 432 312 420 320 415 332 400 345 392 352 399 365 395 388 405 395 411 425 380 440 375 455 365 465 367 485 360 492 358 520 333 516 332 505 322 500 315 507 310 520 298 528 295 540 305 548 315 543 330 560 335 580 334 598 318 605 308 620 315 635 312 650 300 670 310 680 312 695 330 705 335 735 345 745 350 768 358 800 330 812 318 835 298 842 280 825 258 822 248 828 240 828 245 838 258 845 252 852 256 860 240 855 230 850 222 845 208 838 205 868 198 858 180 860 155 865 145 850 130 835 112 822 90 810 75 800 55 808 45 790 55 780 65 778 70 760 57 738 85 748 103 754 110 745 117 760 120 780 118 800 110 820 125 825 135 838 132 848 140 850 136 870 140 885 148 930 150 988 168 1000 175 1015 190 1040 205 1055 215 1060 215 1075 218 1100 215 1110 230 1118 245 1130 255 1150 250 1168 262 1180 260 1195 266 1210 268 1245 280 1250 313 1243 318 1210 316 1195 322 1178 340 1160 352 1153 345 1148 350 1128 352 1105 375 1108 390 1105 400 1092 405 1100 440 1105 462 1100 460 1085 470 1075 476 1060 478 1045 478 1025 462 1010 460 1000 468 990 465 965 480 960 497 950 500 940 515 935 528 922 540 918 548 935 545 952 560 958 567 940 572 935 590 938 600 935 640 937 660 935 665 945 680 952 690 968 705 975 715 985 712 1005 718 1020 712 1038 725 1035 730 1048 745 1055 775 1055 790 1060 792 1072 805 1070 820 1080 822 1098 830 1112 840 1118 852 1110 865 1120 872 1130 888 1135 905 1118 895 1100 888 1090 888 1082 880 1075 888 1065 912 1068 917 1048 928 1045 935 1040 955 1055 950 1045 940 1035 945 1020 955 1003 970 1012 990 1015 1010 1022 1040 1028 1060 1035 1080 1032"/>
        <path class="inland" d="M1070 330h24v690h-24z"/>
        <g class="edge">
          <path d="M605 240L610 270 622 320 640 322 650 325 655 318 668 325 680 340 685 357 715 362 725 380 745 370 755 345 758 315 770 305 775 292 790 292M725 380L712 405 718 430 730 440 745 460 760 463 780 485 800 500 815 502 835 520 850 543 835 560 820 560 815 572 812 585 805 620 780 620 755 630 730 618 690 615 680 595 660 575 645 570 625 558 595 555 580 558 568 540 565 520 545 517 518 497 490 500 468 525 430 520 412 512 395 520 358 520"/>
          <path d="M497 268L502 300 500 325 490 330 488 350 475 355 460 385 448 400 440 420 425 428 412 425M500 325L535 330 550 340 565 335 570 355 590 370 592 400 597 402 620 405 640 380 665 362 685 357M597 402L602 445 620 450 618 468 600 475 585 500 585 520 570 530 568 540M460 385L475 400 515 415 545 410 570 430 602 445M425 428L450 470 478 475 490 500M618 468L650 485 660 495 662 515 672 530 645 545 625 558M672 530L695 525 720 520 735 540 775 580 812 588"/>
          <path d="M808 107L820 125 828 135 826 150 843 155M978 320L985 340 998 360 1002 378 1033 385 1080 388M1033 385L1015 410 1018 440 1012 455 1000 448 980 440 970 442 945 420 928 408 933 430 922 460 915 478 900 490 900 505 920 498 940 502 945 515 910 545 905 560 868 562 862 548 850 543M868 562L860 585 840 608 848 640 865 630 890 632 905 638 922 635 925 620 935 615 960 622 985 640 1010 648 1040 648 1080 672M922 635L942 660 925 700 905 725 890 760 885 795 862 800 865 815 900 845 922 862 960 885 1000 902 1022 920 1050 915 1080 935M905 725L880 718 865 705 850 728 825 732 815 758 795 768 795 790 820 798 838 795 835 820 862 815M942 660L935 645M1080 672L1078 700 1025 745 1022 790 1005 815 970 830 940 835 922 862M1022 920L1020 955 1000 965 992 985 1012 1000 1010 1022"/>
          <path d="M395 520L398 555 390 578 365 592 334 598M390 578L440 572 485 575 490 555 528 558 525 540 530 545 525 550 495 548M470 530L488 545 485 575 495 590 497 612 555 618 562 610 548 570 555 550 568 540M420 580L425 610 432 640 445 655 470 648 480 625 497 612M365 592L378 625 388 660 400 670 410 672 432 645M318 660L355 672 380 695 410 688 400 670M380 695L380 740 350 768M410 688L430 700 445 725 455 730 450 745 475 780 470 800 425 785 405 808 358 802M470 648L470 660 485 680 460 705 458 730M485 680L520 695 528 705 525 765 475 780M528 705L550 695 575 685 578 655 560 625 555 618M578 655L600 640 630 638 632 625 605 590 590 570 595 555M632 625L690 615M575 685L605 700 612 725 655 730 652 765 620 768 590 750 575 735 560 720 545 710 528 705M590 560L620 560 650 568 680 595M525 765L550 790 575 812 602 828 620 800 620 768M602 828L635 850 645 895 660 935M655 730L690 700 720 710 722 745 690 760 675 770 655 755M690 700L692 678 725 672 740 690 775 700 785 715 788 740 722 745M725 672L740 665 770 658 760 635 755 630M788 740L790 785 805 800 828 800M675 770L695 780 715 800 720 830 750 835 768 865 800 865 805 850 838 840 840 820M720 830L700 835 680 825 650 822 635 850M660 935L690 908 740 888 768 865 780 885 782 950 790 985 802 992 798 1035 838 1055 865 1040 868 1025 890 985 915 970 940 955 930 948 900 945 888 935 885 910 900 900 912 912 905 925 930 915 955 918 958 888M865 1040L885 1050 888 1065"/>
          <path d="M405 808L405 840 390 855 388 880 355 885 360 935 380 948 368 970 330 985 318 982 312 950 280 942M475 780L475 812 510 845 505 870 525 885 540 918M380 945L430 945 468 955M430 945L428 1000 425 1045 400 1050 405 1075 388 1080 400 1092M235 855L258 880 255 910 262 940 280 942 300 945 315 975 325 990 328 1030 340 1072 352 1105M262 940L242 945 238 975 222 1000 190 995 168 1000M222 1000L240 1025 228 1045 205 1055M228 1045L258 1070 270 1090 302 1105 305 1090 340 1072M215 1090L270 1100 265 1120 245 1130M270 1100L320 1125 300 1145 290 1160 250 1165M172 905L180 920 198 930 200 945 212 955 205 970 192 960 185 975 165 982 165 965 185 965 205 935M462 1005L428 1005"/>
        </g>
        <path class="land" d="M215 198L238 195 245 208 260 210 250 215 252 222 268 220 270 255 250 268 238 250 228 225z"/>
        <path class="specks" d="M218 198l12 8M240 200l22 8M518 235l8-4M535 240l10 6M545 255l8 8M540 268l15-8M800 240l10-2M815 245l14-3M805 255l12 2M560 240l12 8M556 285l10 8M862 322l14 2M950 60l10 8M852 145l8 18M340 1155l14-3M262 1090l8 12M278 945l22 14"/>
      </g>
      <g transform="translate(2040 1020)">
        <path class="land" d="M60 532L80 538 115 535 128 545 138 552 145 575 158 572 165 575 180 572 198 588 215 585 240 590 238 600 226 605 228 615 238 618 262 608 265 585 268 572 258 565 255 540 263 528 270 532 276 550 272 568 285 575 300 588 325 612 330 630 345 648 357 675 362 690 383 670 378 650 375 632 364 625 370 608 380 600 376 590 390 572 388 560 400 550 425 545 440 518 455 497 465 492 480 505 500 520 495 545 488 560 472 572 478 590 470 625 458 640 457 660 445 678 443 692 455 705 438 735 425 745 410 762 390 775 370 778 350 758 355 775 372 788 393 798 410 785 435 778 455 750 460 705 470 700 497 702 508 712 512 730 503 742 500 765 520 775 538 798 528 775 508 762 510 745 520 740 516 708 500 692 482 686 465 688 468 670 470 650 488 628 488 605 490 575 505 565 520 560 530 542 527 515 522 512 526 540 520 560 516 590 530 600 550 618 556 610 545 600 530 595 528 580 540 566 548 568 553 580 562 582 566 570 552 558 565 548 570 558 598 562 605 578 620 590 626 608 618 625 620 640 605 660 615 680 633 702 625 675 632 655 632 628 638 605 622 592 612 575 606 550 610 514 640 516 690 514 700 495 712 470 712 458 735 442 760 436 785 425 810 422 835 412 850 410 862 398 876 395 875 368 890 345 903 334 920 342 926 355 940 365 945 383 952 372 985 365 1010 372 1018 385 1030 405 1032 430 1018 455 1000 490 985 508 965 515 957 555 970 538 985 535 1010 510 1020 488 1030 484 1045 495 1055 508 1062 500 1080 486 1115 478 1150 476 1150 1570 1115 1576 1075 1596 1050 1594 1035 1588 1020 1575 1015 1548 975 1538 955 1534 918 1520 912 1535 895 1550 890 1575 903 1595 903 1608 890 1615 878 1630 850 1618 832 1625 800 1618 790 1608 785 1595 752 1595 740 1582 728 1582 710 1595 690 1598 675 1612 650 1615 645 1630 620 1636 605 1636 596 1648 580 1650 562 1628 560 1620 545 1626 515 1615 508 1590 492 1580 490 1568 480 1548 465 1546 455 1552 440 1550 415 1547 410 1532 400 1518 390 1528 375 1535 368 1500 358 1450 345 1405 325 1380 318 1362 328 1355 298 1357 280 1366 252 1372 245 1362 228 1365 232 1352 240 1348 222 1342 212 1328 200 1320 180 1317 186 1305 190 1290 188 1265 172 1265 165 1252 140 1243 110 1250 60 1242"/>
        <path class="land" d="M205 440L206 418 225 405 245 398 250 388 290 378 288 360 310 362 320 350 340 345 350 325 375 320 400 315 430 312 442 322 470 325 500 312 520 318 520 330 512 345 490 348 440 348 405 355 380 370 340 382 300 405 275 418 258 450 252 480 258 512 240 500 215 475 215 455z"/>
        <path class="land" d="M85 492L95 475 115 472 122 490 120 502 95 505zM470 490L475 478 488 480 490 498 472 497zM790 225L788 205 802 190 812 178 818 195 830 200 825 230zM800 228L830 232 845 228 855 245 850 265 855 285 840 290 808 270 798 245zM772 232L788 238 785 250 772 245zM875 262L895 270 910 290 905 308 872 315 855 325 862 300 868 275zM511 132l12-10 14 5-5 12-15 2zM541 135l15-2 8-10 4 10-8 10-15-3zM480 128l14-6 8 8-6 8-14-2zM413 78l20-4 25-5 2 14-20 2-22 3zM412 53l12 6 14 2 2 8-20-8zM1024 462l14-3 4 12-12 6zM1003 492l14-5-4 12-12 4zM582 540l5-12 6 14-6 4zM552 552l14-5 4 8-14 8z"/>
        <path class="specks" d="M425 98l12 2M430 106l8 4M452 104l12 8M452 112l10 2M465 102l8 6M468 112l8-4M482 98l10 8M484 106l8 6M490 88l12 4M494 92l14 6M500 95l12 8M502 104l12-6M488 104l14 8M490 100l18 2M508 82l10 6M512 96l4-14M516 92l8 2M522 86l6-4M530 78l8 6M495 112l12 2M525 118l14 2M552 98l16 4M490 150l16 2M496 146l6 10M480 120l6 8M462 66l8-3M672 176l8 2M634 228l8 6M768 180l10 2M776 218l10 4M770 255l20 4M782 275l6 2M800 235l30-8M825 240l8 10M845 298l1 4M880 268l10 6M925 300l12 8M670 337l4 2M792 317l4 1M738 365l12-6M758 358l4 1M772 343l4 1M648 410l14-1M646 430l5 12M608 463l3 1M640 492l24 5M678 470l20 10M682 480l22 8M690 490l16 2M688 500l16 8M700 478l14-12M798 388l22 6M808 376l12 8M812 398l14 2M806 408l20 4M820 370l6 14M832 384l10 3M780 420l14 4M862 365l6 8M918 350l12 2M930 348l14-4M1002 372l14 6M1010 380l16 8M1015 405l14-2M1074 454l4 1M544 500l14 2M548 512l8 3M300 375l8 12M292 372l2 14M318 390l8-12M330 386l4-10M340 380l6-12M355 375l8-12M368 370l6-10M206 440l16 6M208 452l14 2M212 465l14 4M240 495l14 14M350 338l8 4M128 544l14 4M140 570l14 4M350 760l14 18M368 772l20 4M606 650l24 12M612 640l16 26M615 660l14 20M606 662l22 -8M628 680l6 20M615 634l12 16M520 770l14 20M160 545l20 12"/>
        <g class="edge">
          <path d="M60 598L90 598 135 632 230 688 290 670 325 655 320 625 330 612M325 655L305 665 320 685 315 705 250 725 210 745 165 762 148 760 135 790 135 800 100 850 78 882 50 930 0 960M210 745L205 790 193 800 208 820 265 840 268 860 320 865 330 880 335 928 365 930 370 940 435 965 455 995 490 1002 515 985 525 1002 560 1025 585 1040 610 1000 610 985 628 960 628 928 605 910 605 880 590 840 582 780 600 740 595 705 570 705 552 680 565 660 590 650 580 620 592 595 575 580 552 558"/>
          <path d="M78 882L120 930 118 960 125 1000 112 1020 135 1045 137 1080 160 1075 215 1070 235 1055 270 1072 295 1120 320 1140 345 1155 360 1125 390 1118 412 1070 460 1085 500 1092 520 1105 545 1090 570 1102 610 1075 585 1058 585 1040M137 1080L130 1105 95 1105 85 1140 78 1165 85 1180 125 1215 138 1243M345 1155L310 1165 275 1162 248 1150 245 1128 230 1145 218 1175 228 1185 235 1205 215 1210 188 1263M335 1155L345 1228 330 1270 305 1280 298 1310 302 1340 298 1357M345 1228L400 1240 430 1265 435 1285 465 1290 470 1298 508 1298 510 1330 540 1322 585 1305 648 1300 655 1275 670 1255 640 1235 640 1220 660 1195 640 1185 625 1150 572 1145 575 1120 570 1102M345 1405L410 1395 435 1380 465 1425 485 1410 545 1400 540 1322M545 1400L555 1415 585 1450 580 1490 550 1510 545 1525 490 1542 500 1560 490 1568M580 1490L608 1498 622 1510 640 1495 640 1460 648 1410 635 1400 640 1365 660 1345 650 1320 648 1300M640 1365L650 1385 685 1380 710 1415 718 1468 680 1515 665 1538 620 1550 605 1535 622 1510M680 1515L735 1538 765 1520 798 1465 850 1455 825 1420 848 1405 850 1350 875 1320 868 1285 878 1262 905 1260 920 1245 945 1270 975 1220 985 1185 1000 1185 1010 1200 1032 1208 1045 1180 1040 1130 1020 1120 1018 1095 1045 1060 1050 1020 1042 960 1068 955 1080 940 1020 930 1032 880 1015 850 1010 820 1000 820 1012 790 1008 735 990 708 1030 682 1040 640 1070 605 1050 570 1025 540 1012 510M1080 940L1080 965 1100 975 1115 1010M850 1455L915 1480 950 1460 1000 1500 1040 1525 1062 1550 1095 1530 1118 1490M915 1480L918 1520M630 1545L655 1595 645 1612M0 862L30 865 70 882M0 1130L20 1125 60 1142"/>
        </g>
      </g>
      </g>
    </svg>
  </section>

  <aside class="dock">
    <div class="dockhead tall"><button type="button" aria-label="Открепить"><svg><use href="#float"/></svg></button><button type="button" aria-label="Закрыть"><svg><use href="#shut"/></svg></button></div>
    <div class="list browser"><div class="pane"><i class="row"></i></div><div class="vscroll"><i class="up"></i><i class="g1"></i><i class="thumb"></i><i class="g2"></i><i class="down"></i></div></div>
    <div class="hscroll"><i class="track"></i><i class="right"></i><i class="corner"></i></div>
    <div class="dockhead second"><button type="button" aria-label="Открепить"><svg><use href="#float"/></svg></button><button type="button" aria-label="Закрыть"><svg><use href="#shut"/></svg></button></div>
    <input class="line" type="text" aria-label="Фильтр">
    <div class="list tools"><div class="pane"></div><div class="vscroll"><i class="up"></i><i class="thumb"></i><i class="g2"></i><i class="down"></i></div></div>
    <div class="dockhead third"><button type="button" aria-label="Открепить"><svg><use href="#float"/></svg></button><button type="button" aria-label="Закрыть"><svg><use href="#shut"/></svg></button></div>
    <input class="line" type="text" aria-label="Поиск">
    <div class="combo dockcombo"><select aria-label="Категория"><option></option></select></div>
    <div class="list services"><div class="pane"><div class="srow"></div><div class="srow grey"><button type="button" class="btn">Добавить</button></div><div class="srow two"><button type="button" class="btn">Добавить</button></div></div><div class="vscroll"><i class="up"></i><i class="thumb"></i><i class="g2"></i><i class="down"></i></div></div>
    <div class="news"><svg viewBox="0 0 10 10"><path d="M1 8q1.500-1 1.500-4.500Q3 1 5 1t2.500 2.500Q7.500 7 9 8zM4 9h2" fill="#f0a22e" stroke="#f0a22e"/></svg><a href="#">Свежие геоданные для проекта</a></div>
  </aside>
</main>

<footer class="statusbar">
  <div class="locate"><svg><use href="#search"/></svg><input type="text" placeholder="Type to locate (Ctrl+K)" aria-label="Поиск"></div>
  <span class="message">0 feature(s) selected on layer Russia_Regions.</span>
  <label for="coord">Coordinate</label><input id="coord" class="line coord" type="text" value="-4714208,10599282">
  <svg class="i16 mouse" viewBox="0 0 16 16"><path d="M2 2l3-1 6 5 3 5-3 4-4-1-4-5z" fill="#ccc" stroke="#333" stroke-width="1.200"/><path d="M3 3l4 6M6 2l4 7M1 7l6 2M12 5l3-3" stroke="#222" stroke-width="1.400"/><circle cx="10.500" cy="11" r="2" fill="#fff" stroke="#222"/></svg>
  <label for="scale">Масштаб</label><div class="combo scale"><input id="scale" type="text" value=".:27332077"></div>
  <svg class="i16 lock" viewBox="0 0 16 16"><path d="M4.500 8V5q0-3.500 3.500-3.500T11.500 5v3" fill="none" stroke="#888" stroke-width="1.600"/><rect x="2" y="7" width="12" height="8.500" rx="1" fill="#555"/></svg>
  <label for="magn">Magnifier</label><div class="spin magn"><input id="magn" type="text" value="100%"><i class="steps"></i></div>
  <label for="rot" class="rotlabel">Вращение</label><div class="spin rot"><input id="rot" type="text" value="0.0 °"><i class="steps"></i></div>
  <label class="check"><input type="checkbox" checked>Отрисовка</label>
  <button type="button" class="crs"><svg class="i16" viewBox="0 0 16 16"><circle cx="8" cy="8" r="6.500" fill="#999" stroke="#555"/><path d="M1 5h14M0 8h16M1 11h14M8 1v14M4.500 2q-3 6 0 12M11.500 2q3 6 0 12" fill="none" stroke="#555"/></svg>Unknown CRS</button>
  <button type="button" class="msgs" aria-label="Сообщения"><svg viewBox="0 0 16 16"><path d="M3 2h10q3 0 3 5t-3 5h-1l1 3-4-3H3q-3 0-3-5t3-5z" fill="#555"/><path d="M3 7h2M7 7h2M11 7h2" stroke="#fff" stroke-width="1.600"/></svg></button>
</footer>

<section class="dialog" role="dialog" aria-label="Свойства слоя">
  <header class="dlgtitle"><svg class="i16"><use href="#qlogo"/></svg><span>Свойства слоя — Russia_Regions | Стиль</span><button type="button" aria-label="Закрыть"><svg viewBox="0 0 10 10"><path d="M.5.5l9 9M9.500.5l-9 9"/></svg></button></header>
  <div class="dlgbody">
    <nav class="pages">
      <div class="find"><svg><use href="#search"/></svg><input type="text" aria-label="Поиск"></div>
      <button type="button"><svg><use href="#s-info"/></svg>Информация</button>
      <button type="button"><svg><use href="#s-source"/></svg>Источник</button>
      <button type="button" class="active"><svg><use href="#s-style"/></svg>Стиль</button>
      <button type="button"><svg viewBox="0 0 24 24"><path d="M.5 12L5 6h18.500v12H5z" fill="#fbe034" stroke="#d0ad13"/><text x="5" y="15" class="abc">abc</text></svg>Подписи</button>
      <button type="button"><svg><use href="#diag"/></svg>Диаграммы</button>
      <button type="button"><svg><use href="#s-3d"/></svg>3D View</button>
      <button type="button"><svg><use href="#s-fields"/></svg>Поля</button>
      <button type="button"><svg><use href="#s-form"/></svg>Attributes Form</button>
      <button type="button"><svg><use href="#s-join"/></svg>Связи</button>
      <button type="button"><svg><use href="#s-aux"/></svg>Auxiliary Storage</button>
      <button type="button"><svg><use href="#s-act"/></svg>Действия</button>
      <button type="button"><svg><use href="#s-tip"/></svg>Вывод</button>
      <button type="button"><svg><use href="#s-brush"/></svg>Отрисовка</button>
      <button type="button"><svg><use href="#s-eps"/></svg>Переменные</button>
      <button type="button"><svg><use href="#s-meta"/></svg>Метаданные</button>
      <button type="button"><svg><use href="#s-dep"/></svg>Dependencies</button>
      <button type="button"><svg><use href="#s-leg"/></svg>Легенда</button>
      <button type="button"><svg><use href="#s-srv"/></svg>QGIS Сервер</button>
      <button type="button"><svg><use href="#s-dig"/></svg>Оцифровка</button>
    </nav>
    <div class="style">
      <div class="combo tall renderer"><svg viewBox="0 0 16 16"><path d="M1 1.500h10v3H1zM3 6.500h10v3H3zM1 11.500h10v3H1z" fill="#10b45b" stroke="#075c36"/></svg><select aria-label="Тип знака"><option>Обычный знак</option></select></div>
      <div class="symbol">
        <div class="preview"><i></i></div>
        <div class="symtree">
          <div class="symrow"><i class="tri"></i><i class="swatch orange"></i><b>Заливка</b></div>
          <div class="symrow child"><i class="swatch khaki"></i><span>Простая заливка</span></div>
        </div>
        <div class="symbtns">
          <button type="button" class="btn" aria-label="Добавить"><svg viewBox="0 0 16 16"><path d="M6 1.500h4V6h4.500v4H10v4.500H6V10H1.500V6H6z" fill="#fff" stroke="#45824a"/><path d="M8 3.500v9M3.500 8h9" stroke="#45824a" stroke-width="1.600"/></svg></button>
          <button type="button" class="btn" disabled aria-label="Выше"><svg viewBox="0 0 16 16"><path d="M8 2.500l6.500 11h-13z" fill="#9aa3ad" stroke="#777"/></svg></button>
          <button type="button" class="btn" disabled aria-label="Удалить"><svg viewBox="0 0 16 16"><rect x="1.500" y="5.500" width="13" height="5" fill="#fff" stroke="#b88"/><path d="M3 8h10" stroke="#c88" stroke-width="1.600"/></svg></button>
          <button type="button" class="btn" disabled aria-label="Ниже"><svg viewBox="0 0 16 16"><path d="M8 13.500l6.500-11h-13z" fill="#9aa3ad" stroke="#777"/></svg></button>
          <button type="button" class="btn" aria-label="Дублировать"><svg viewBox="0 0 16 16"><path d="M1.500 3.500h3v9h8v2h-11z" fill="#8b8f86" stroke="#666"/><rect x="4" y="1.500" width="10" height="11" fill="#f1f1f1" stroke="#777"/><rect x="10" y="10" width="5" height="5" fill="#f5ed9a" stroke="#d0a91c"/></svg></button>
          <button type="button" class="btn" aria-label="Заблокировать"><svg viewBox="0 0 16 16"><path d="M5 4q0-3 3.500-3T12 4v4" fill="none" stroke="#a5a5a5" stroke-width="2"/><rect x="2.500" y="7.500" width="11" height="7" fill="#f3dc22" stroke="#c7a613"/></svg></button>
        </div>
      </div>
      <hr>
      <div class="typerow"><label for="ltype">Тип слоя</label><div class="combo"><select id="ltype"><option>Простая заливка</option></select></div></div>
      <div class="form">
        <label for="fc">Цвет заливки</label><div class="colour"><button id="fc" type="button" class="btn"><i class="orange"></i></button><button type="button" class="btn arrow" aria-label="Меню цвета"></button></div><button type="button" class="ovr" aria-label="Переопределить"><svg><use href="#ovr"/></svg></button>
        <label for="fs">Стиль заливки</label><div class="combo tall ico"><i class="brushfill"></i><select id="fs"><option>Сплошная</option></select></div><button type="button" class="ovr" aria-label="Переопределить"><svg><use href="#ovr"/></svg></button>
        <label for="sc">Цвет обводки</label><div class="colour"><button id="sc" type="button" class="btn"><i class="black"></i></button><button type="button" class="btn arrow" aria-label="Меню цвета"></button></div><button type="button" class="ovr" aria-label="Переопределить"><svg><use href="#ovr"/></svg></button>
        <label for="sw">Толщина линий</label><div class="widthrow"><div class="spin"><input id="sw" type="text" value="0.260000"><svg class="clear" viewBox="0 0 14 10"><path d="M4 0h10v10H4L0 5z" fill="#8d8d8d"/><path d="M6 2.500l5 5M11 2.500l-5 5" stroke="#fff" stroke-width="1.200"/></svg><i class="steps"></i></div><div class="combo units"><select aria-label="Единицы толщины"><option>Millimeters</option></select></div></div><button type="button" class="ovr" aria-label="Переопределить"><svg><use href="#ovr"/></svg></button>
        <label for="ss">Стиль обводки</label><div class="combo tall ico"><i class="penline"></i><select id="ss"><option>Сплошная</option></select></div><button type="button" class="ovr" aria-label="Переопределить"><svg><use href="#ovr"/></svg></button>
        <label for="js">Соединение сегментов</label><div class="combo tall join"><svg viewBox="0 0 16 16"><path d="M1 1h10l4 4v10H7V8H1z" fill="#557bb0"/><path d="M1 1h10l4 4v10M1 9h5v6" fill="none" stroke="#111" stroke-width="1.500"/><path d="M1 5h9v10" fill="none" stroke="#e8d12d" stroke-width="1.500" stroke-dasharray="2 1.500"/></svg><select id="js"><option>Фаска</option></select></div><button type="button" class="ovr" aria-label="Переопределить"><svg><use href="#ovr"/></svg></button>
        <span class="offlabel">Смещение</span>
        <div class="offset"><div class="xy"><label for="ox">x</label><div class="spin"><input id="ox" type="text" value="0.000000"><i class="steps"></i></div><label for="oy">y</label><div class="spin"><input id="oy" type="text" value="0.000000"><i class="steps"></i></div></div><div class="combo units"><select aria-label="Единицы смещения"><option>Millimeters</option></select></div></div>
      </div>
      <div class="enable"><label class="check"><input type="checkbox" checked>Включить слой</label><button type="button" class="ovr" aria-label="Переопределить"><svg><use href="#ovr"/></svg></button><label class="check effects"><input type="checkbox">Эффекты отрисовки</label><button type="button" class="btn star" disabled aria-label="Настроить эффекты"><svg viewBox="0 0 16 16"><path d="M8 1l2 5h5l-4 3.500L12.500 15 8 11.500 3.500 15 5 9.500 1 6h5z" fill="#a79f83"/><path d="M12 9v6M14 10h2" stroke="#888"/></svg></button></div>
      <button type="button" class="rendering"><i></i>Layer Rendering</button>
      <div class="actions"><button type="button" class="btn stylebtn"><span>Стиль</span><i class="drop"></i></button><button type="button" class="btn ok">OK</button><button type="button" class="btn">Отмена</button><button type="button" class="btn">Применить</button><button type="button" class="btn">Справка</button></div>
    </div>
  </div>
</section>
</body>
</html>
```

FILE: styles.css
```css
* { box-sizing: border-box; }
body { margin: 0; height: 100vh; display: flex; flex-direction: column; overflow: hidden; background: #efefef; color: #000; font: 11px/16px "DejaVu Sans Condensed", "Noto Sans", sans-serif; }
button, input, select { font: inherit; color: inherit; margin: 0; padding: 0; border: 0; background: none; border-radius: 0; min-width: 0; }
select { appearance: none; opacity: 1; }
button { display: flex; align-items: center; justify-content: center; }
.sprite { position: absolute; width: 0; height: 0; }
.i16 { width: 16px; height: 16px; flex: none; }
.abc { font: bold 9px "Liberation Sans", sans-serif; fill: #333; }

.titlebar { flex: 0 0 22px; display: flex; align-items: center; background: #fff; padding-left: 2px; color: #8a8a8a; font: 12px/20px "Noto Sans", sans-serif; }
.titletext { margin-left: 5px; }
.wincontrols { margin-left: auto; display: flex; }
.wincontrols button { width: 46px; height: 18px; }
.wincontrols svg, .dlgtitle button svg { width: 10px; height: 10px; fill: none; stroke: #777; }
.menubar { flex: 0 0 20px; display: flex; gap: 15px; padding-left: 11px; border-bottom: 1px solid #d2d2d2; color: #8e8e8e; font: 11px/19px "Noto Sans", sans-serif; }
.menubar u { text-underline-offset: 2px; }

.toolbar { flex: 0 0 31px; display: flex; align-items: center; gap: 1px; border-bottom: 1px solid #b9b9b9; background: linear-gradient(#fafafa, #eee); }
.toolbar.last { flex-basis: 30px; }
.tb { width: 24px; height: 24px; flex: none; border-radius: 2px; }
.tb svg, .siderow svg { width: 16px; height: 16px; }
.tb:disabled svg { opacity: .4; filter: grayscale(.8); }
.tb.on { background: #dcdcdc; border: 1px solid #a3a3a3; }
.tb.wide { margin-right: 2px; }
.scp { flex-direction: column; line-height: 8px; }
.scp small { font-size: 7px; color: #777; }
.scp b { font-size: 8px; color: #22d; }
.grip { flex: none; width: 4px; height: 17px; margin: 0 3px 0 8px; background: radial-gradient(circle, #b5b5b5 1px, transparent 1px) 0 0 / 3px 3px; }
.grip:first-child { margin-left: 5px; }
.grip.far { margin-left: 24px; }
.sep { flex: none; width: 1px; height: 14px; margin: 0 2px 0 3px; background: #ccc; }
.drop { flex: none; width: 11px; height: 4px; background: #555; clip-path: polygon(2px 0, 10px 0, 6px 4px); }
.drop.pale { background: #999; }

.combo { display: grid; align-items: center; height: 22px; border: 1px solid #b2b2b2; border-radius: 3px; background: linear-gradient(#fefefe, #ececec); min-width: 0; }
.combo > * { grid-area: 1 / 1; }
.combo::after { content: ""; grid-area: 1 / 1; justify-self: end; width: 8px; height: 4px; margin-right: 7px; background: #555; clip-path: polygon(0 0, 8px 0, 4px 4px); pointer-events: none; }
.combo select { width: 100%; height: 100%; padding-left: 3px; }
.combo.tall { height: 24px; }
.spin { display: flex; align-items: center; height: 20px; border: 1px solid #b2b2b2; border-radius: 3px; background: #fff; min-width: 0; overflow: hidden; }
.spin input { flex: 1; width: 0; height: 100%; padding-left: 3px; }
.steps { flex: none; align-self: stretch; width: 15px; border-left: 1px solid #b2b2b2; background: linear-gradient(#fdfdfd, #eee); display: flex; flex-direction: column; align-items: center; justify-content: center; gap: 3px; }
.steps::before, .steps::after { content: ""; width: 8px; height: 4px; background: #555; clip-path: polygon(0 100%, 8px 100%, 4px 0); }
.steps::after { clip-path: polygon(0 0, 8px 0, 4px 4px); }
.off { color: #888; }
.off.spin { background: #efefef; }
.tolerance { width: 81px; }
.snapunits { width: 87px; }
.btn { border: 1px solid #b2b2b2; border-radius: 3px; background: linear-gradient(#fefefe, #ececec); }
input[type="checkbox"] { appearance: none; flex: none; width: 14px; height: 14px; border: 1px solid #b5b5b5; background: #fff; display: grid; place-items: center; }
input[type="checkbox"]:checked::before { content: ""; width: 9px; height: 9px; background: #111; clip-path: polygon(0 50%, 20% 40%, 38% 65%, 75% 0, 100% 0, 45% 100%, 30% 100%); }
.check { display: flex; align-items: center; gap: 4px; }

.work { flex: 1; min-height: 0; display: flex; }
.sidetools { flex: 0 0 43px; padding-top: 5px; background: linear-gradient(90deg, #fafafa, #eee); }
.hgrip { display: block; width: 17px; height: 5px; margin: 0 0 3px 15px; background: radial-gradient(circle, #b5b5b5 1px, transparent 1px) 0 0 / 3px 3px; }
.siderow { display: flex; align-items: center; gap: 4px; height: 24px; padding-left: 8px; }
.siderow.mid { padding-left: 14px; }
.layers { flex: 0 0 246px; display: flex; flex-direction: column; border-left: 1px solid #b2b2b2; padding-bottom: 1px; }
.dockhead { display: flex; gap: 3px; justify-content: flex-end; padding: 5px 1px 0 4px; height: 23px; flex: none; }
.dockhead h2 { margin: 0 auto 0 0; font: 12px/14px "Noto Sans", sans-serif; }
.dockhead button { width: 11px; height: 11px; }
.dockhead svg { width: 11px; height: 11px; }
.layers .dockhead { padding-right: 2px; }
.layertools { display: flex; align-items: center; gap: 1px; padding: 0 0 4px 4px; height: 28px; flex: none; }
.tree { flex: 1; border: 1px solid #b2b2b2; border-left: 0; background: #fff; }
.treerow { display: flex; align-items: center; height: 18px; padding-left: 24px; background: #efefef; font-size: 12px; text-decoration: underline; }
.swatch { flex: none; width: 16px; height: 16px; border: 1px solid #6c7478; margin: 0 6px; }
.khaki { background: #aea88c; }
.orange { background: #fdbf6f; }
.canvas { flex: 1; min-width: 0; margin: 1px 6px 0 6px; border: 1px solid #b2b2b2; background: #fff; overflow: hidden; }
.map { display: block; width: 1219px; height: 843px; }
.land { fill: #fdbf6f; stroke: #3a3834; stroke-width: 4; stroke-linejoin: round; }
.inland { fill: #fdbf6f; }
.edge path { fill: none; stroke: #3a3834; stroke-width: 4; stroke-linejoin: round; }
.specks { fill: none; stroke: #4a4136; stroke-width: 4; }

.dock { flex: 0 0 397px; display: flex; flex-direction: column; padding-bottom: 4px; }
.dockhead.tall { height: 51px; }
.dockhead.second { height: 57px; padding-top: 10px; }
.dockhead.third { height: 26px; padding-top: 10px; }
.list { display: flex; border: 1px solid #b2b2b2; border-right: 0; background: #fff; }
.pane { flex: 1; min-width: 0; }
.browser { flex: 1; min-height: 0; }
.browser .row { display: block; height: 18px; margin-top: 306px; background: #efefef; }
.tools { flex: 0 0 95px; }
.services { flex: 0 0 124px; margin-top: 7px; }
.vscroll { width: 14px; display: flex; flex-direction: column; border-left: 1px solid #b2b2b2; background: #e6e6e6; }
.vscroll .thumb { background: #f8f8f8; border: solid #b2b2b2; border-width: 1px 0; }
.up, .down { flex: 0 0 13px; background: #f6f6f6; display: grid; place-items: center; }
.up::before, .down::before { content: ""; width: 8px; height: 4px; background: #555; clip-path: polygon(0 100%, 8px 100%, 4px 0); }
.down { border-top: 1px solid #b2b2b2; }
.down::before { clip-path: polygon(0 0, 8px 0, 4px 4px); }
.g1 { height: 52px; border-top: 1px solid #b2b2b2; }
.g2 { flex: 1; }
.browser .thumb { height: 56px; }
.tools .thumb { height: 27px; }
.services .thumb { height: 65px; }
.hscroll { flex: 0 0 14px; display: flex; border-bottom: 1px solid #b2b2b2; }
.hscroll .track { flex: 1; background: #e0e0e0; }
.hscroll .right { width: 14px; border: solid #b2b2b2; border-width: 0 1px; background: #f6f6f6; display: grid; place-items: center; }
.hscroll .right::before { content: ""; width: 4px; height: 8px; background: #555; clip-path: polygon(0 0, 4px 4px, 0 8px); }
.hscroll .corner { width: 13px; }
.line { border: 1px solid #b2b2b2; border-radius: 2px; background: #fff; height: 21px; }
.dock .line { flex: none; border-right: 0; margin-bottom: 1px; }
.dockcombo { flex: none; margin-top: 6px; border-right: 0; }
.srow { height: 15px; display: flex; align-items: center; justify-content: flex-end; padding-right: 5px; }
.srow .btn { width: 68px; height: 20px; padding-right: 7px; justify-content: flex-end; }
.srow.grey { height: 59px; background: #e4e3de; }
.srow.two { height: 47px; padding-top: 8px; }
.news { flex: 0 0 32px; display: flex; align-items: center; justify-content: center; gap: 4px; margin-top: 4px; padding: 5px 0 0 2px; border: 1px solid #b2b2b2; border-right: 0; }
.news svg { width: 10px; height: 10px; }
.news a { color: #00f; font-size: 11px; }

.statusbar { flex: 0 0 27px; display: flex; align-items: center; padding: 2px 6px 0 4px; }
.locate, .find { display: flex; align-items: center; background: #fff; border: 1px solid #b2b2b2; }
.locate { width: 200px; height: 22px; border-radius: 3px; padding-left: 8px; }
.locate svg, .find svg { width: 13px; height: 13px; flex: none; }
.locate input { flex: 1; padding-left: 7px; }
.locate input::placeholder { color: #888; opacity: 1; }
.message { margin: 0 auto 0 7px; }
.coord { width: 114px; height: 22px; margin-left: 4px; padding-left: 6px; }
.mouse { margin: 0 12px 0 4px; }
.scale { width: 81px; margin-left: 3px; background: #fff; overflow: hidden; }
.scale input { width: 60px; height: 20px; border-right: 1px solid #b2b2b2; }
.lock { margin: 0 5px 0 9px; }
.magn { width: 88px; height: 22px; margin-left: 3px; }
.rotlabel { margin-left: 9px; }
.rot { width: 84px; height: 22px; margin: 0 6px 0 5px; }
.crs { gap: 3px; margin-left: 15px; }
.msgs { margin-left: 20px; }
.msgs svg { width: 16px; height: 16px; }

.dialog { position: absolute; left: 1051px; top: 67px; width: 827px; height: 921px; display: flex; flex-direction: column; border: 1px solid #6a6a6a; background: #efefef; box-shadow: 0 3px 14px rgba(0, 0, 0, .4); }
.dlgtitle { flex: 0 0 31px; display: flex; align-items: center; padding: 0 10px 2px 8px; background: #fff; font: 12px/16px "Noto Sans", sans-serif; }
.dlgtitle span { margin: 0 auto 0 5px; }
.dlgtitle button svg { stroke: #000; }
.dlgbody { flex: 1; min-height: 0; display: flex; }
.pages { flex: 0 0 150px; min-width: 0; background: #5d5d5d; font: 12px/16px "Noto Sans", sans-serif; }
.find { height: 22px; margin-bottom: 6px; padding-left: 8px; }
.find input { flex: 1; width: 0; }
.pages button { width: 100%; height: 36px; justify-content: flex-start; gap: 8px; padding-left: 5px; color: #fff; white-space: nowrap; }
.pages button svg { width: 24px; height: 24px; flex: none; }
.pages .active { background: #efefef; color: #000; padding-left: 8px; }
.style { flex: 1; min-width: 0; display: flex; flex-direction: column; padding: 3px 3px 2px 4px; }
.renderer svg { width: 16px; height: 16px; margin-left: 6px; }
.renderer select { padding-left: 23px; }
.symbol { display: grid; grid-template-columns: 142px 1fr 62px; height: 135px; margin-top: 6px; }
.symbol > .symtree { margin-right: 6px; }
.preview { display: grid; align-items: center; }
.preview i { width: 61px; height: 61px; margin-left: 38px; border: 1px solid #222; background: #fdbf6f; }
.symtree { border: 1px solid #b2b2b2; background: #fff; }
.symrow { display: flex; align-items: center; height: 18px; padding-left: 6px; }
.symrow.child { padding-left: 37px; background: #efefef; }
.tri { width: 8px; height: 4px; margin-right: 3px; background: #555; clip-path: polygon(0 0, 8px 0, 4px 4px); }
.symbtns { display: grid; grid-template-columns: 28px 28px; grid-auto-rows: 24px; gap: 5px 6px; }
.symbtns svg { width: 16px; height: 16px; }
.btn:disabled svg { opacity: .35; }
hr { width: 100%; margin: 6px 0 0; border: 0; border-top: 1px solid #a0a0a0; border-bottom: 1px solid #fff; }
.typerow { display: flex; align-items: center; margin-top: 9px; padding-right: 10px; }
.typerow label { flex: 0 0 45px; white-space: nowrap; }
.typerow .combo { flex: 1; }
.form { display: grid; grid-template-columns: 123px 1fr 55px; grid-template-rows: repeat(6, 32px) 56px; align-items: center; margin-top: 8px; padding-left: 10px; }
.form label { white-space: nowrap; }
.colour { display: flex; gap: 1px; height: 22px; }
.colour .btn:first-child { flex: 1; padding: 2px 4px; }
.colour .btn i { width: 100%; height: 16px; border-radius: 3px; }
.black { background: #222; }
.arrow { width: 12px; }
.arrow::before { content: ""; width: 8px; height: 4px; background: #555; clip-path: polygon(0 0, 8px 0, 4px 4px); }
.ovr { width: 24px; height: 18px; margin-left: 8px; }
.ovr svg { width: 24px; height: 18px; }
.ico select { padding-left: 39px; }
.brushfill { width: 32px; height: 16px; margin-left: 5px; background: #666; }
.penline { width: 32px; height: 2px; margin-left: 5px; background: #000; }
.join svg { width: 16px; height: 16px; margin-left: 4px; }
.join select { padding-left: 23px; }
.widthrow, .offset { display: flex; align-items: center; gap: 6px; }
.widthrow .spin, .xy { flex: 1; }
.clear { width: 13px; height: 10px; margin-right: 11px; }
.units { width: 109px; flex: none; }
.xy { display: grid; grid-template-columns: 12px 1fr; grid-auto-rows: 28px; align-items: center; }
.enable { display: flex; align-items: center; height: 24px; margin-top: auto; padding-left: 1px; }
.enable .ovr { margin-left: 13px; }
.effects { margin-left: 41px; }
.star { width: 24px; height: 24px; margin-left: 10px; }
.star svg { width: 16px; height: 16px; }
.rendering { align-self: flex-start; gap: 9px; margin-top: 23px; padding-left: 5px; font-weight: bold; }
.rendering i { width: 7px; height: 11px; background: #333; clip-path: polygon(0 0, 7px 50%, 0 100%); }
.actions { display: flex; gap: 6px; margin-top: 8px; }
.actions .btn { width: 80px; height: 22px; }
.actions .stylebtn { margin-right: auto; gap: 16px; padding-left: 14px; }
.actions .ok { border-color: #3d9ce8; background: linear-gradient(#fcfdfe, #e6edf3); }
```
